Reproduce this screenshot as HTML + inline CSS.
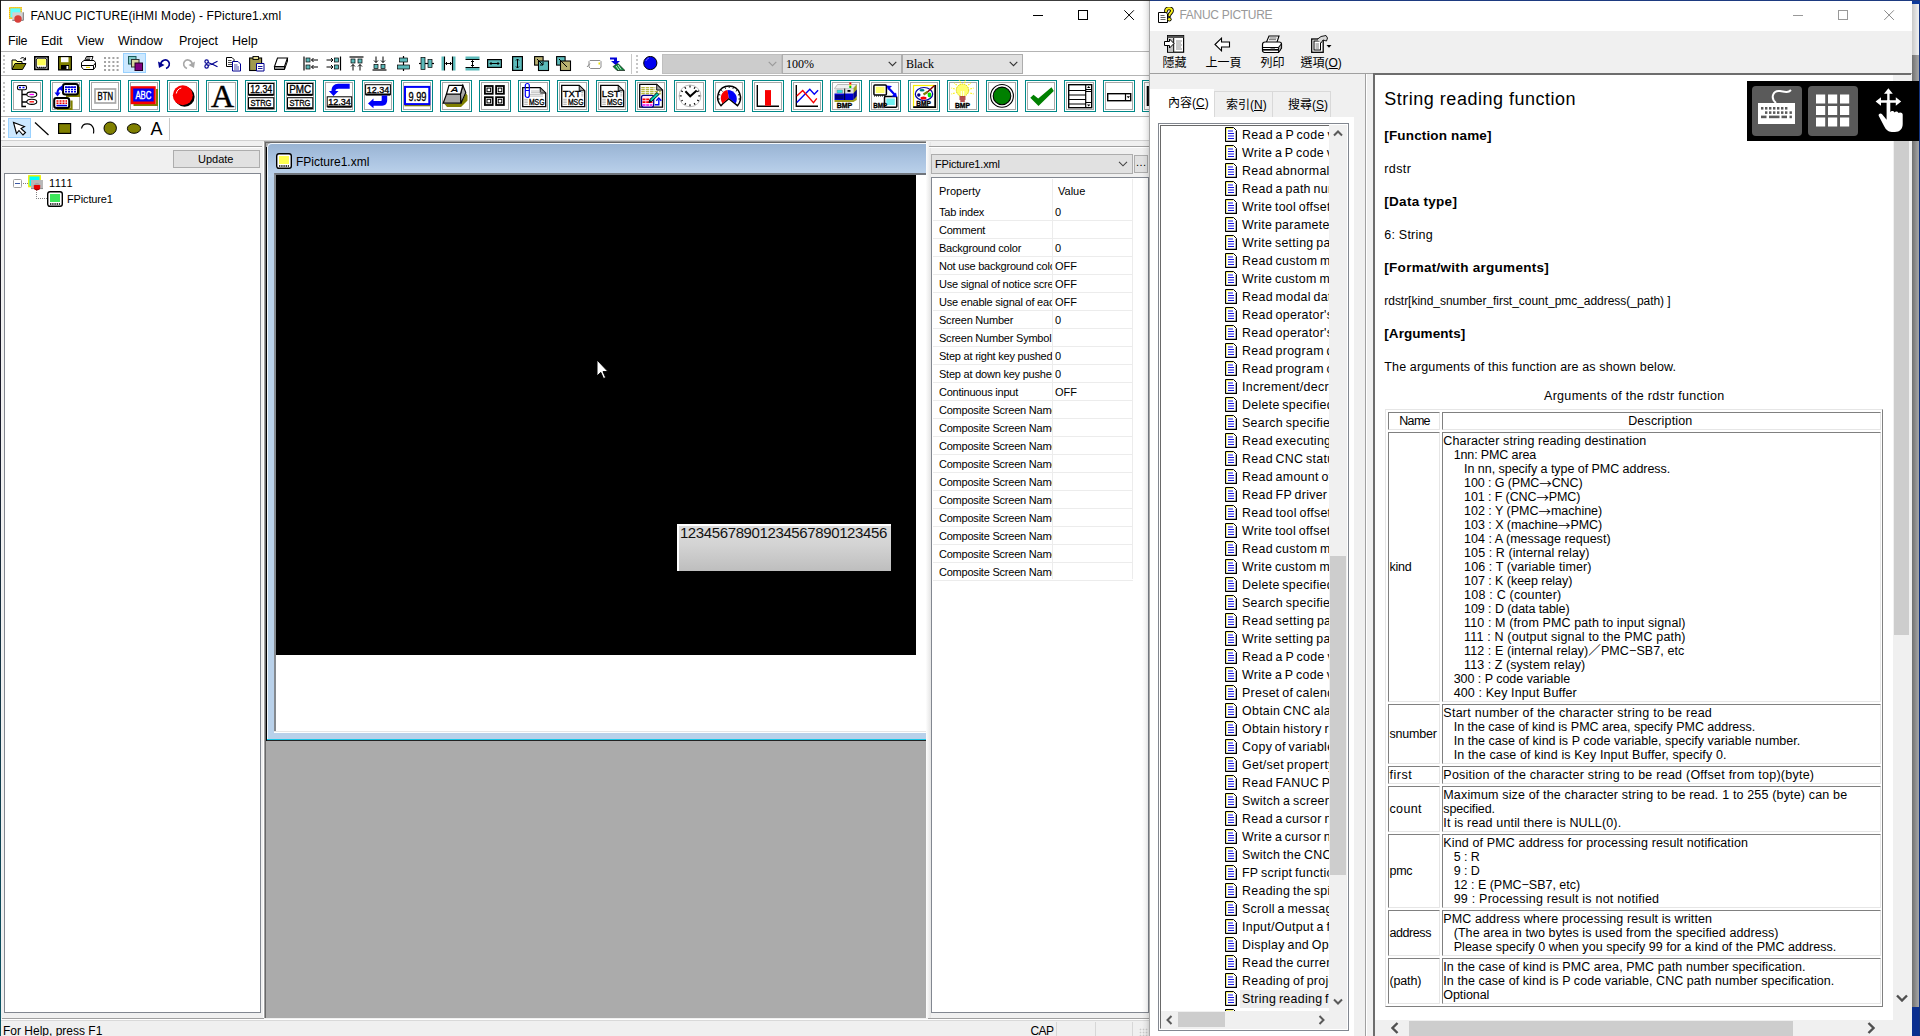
<!DOCTYPE html>
<html lang="en"><head><meta charset="utf-8"><title>FANUC PICTURE</title>
<style>
*{box-sizing:border-box;margin:0;padding:0}
html,body{width:1920px;height:1036px;overflow:hidden;background:#fff}
body{position:relative;font-family:"Liberation Sans","Noto Sans CJK TC",sans-serif;font-size:12px;color:#000}
.a{position:absolute}
.t{position:absolute;white-space:pre;line-height:1}

</style></head>
<body>
<!-- left_frame.html -->
<div class="a" id="lw" style="left:0;top:0;width:1150px;height:1036px;background:#f0f0f0;overflow:hidden">
 <div class="a" style="left:0;top:0;width:1150px;height:31px;background:#fff"></div>
 <div class="a" style="left:0;top:0;width:1150px;height:1px;background:#3c3c3c"></div>
 <svg class="a" style="left:9px;top:7px" width="16" height="16" viewBox="0 0 16 16"><rect x=".6" y=".6" width="11.600" height="10.600" fill="#60ffff" stroke="#f0a818" stroke-width="1.300"/><rect x=".6" y=".6" width="11.600" height="10.600" fill="none" stroke="#f8e838" stroke-width="1.300" stroke-dasharray="1 1"/><rect x="3.300" y="5.300" width="11.500" height="8" fill="#d2d2d2"/><path d="M14.300 5.300v8h-11" fill="none" stroke="#7a7a7a" stroke-width="1"/><circle cx="9" cy="12" r="3.700" fill="#d8403a"/></svg>
 <div class="t" style="left:30.500px;top:9.600px;font-size:12px;letter-spacing:.1px">FANUC PICTURE(iHMI Mode) - FPicture1.xml</div>
 <!-- window buttons -->
 <div class="a" style="left:1033px;top:15px;width:10px;height:1px;background:#000"></div>
 <div class="a" style="left:1078px;top:10px;width:10px;height:10px;border:1px solid #000"></div>
 <svg class="a" style="left:1124px;top:10px" width="11" height="11" viewBox="0 0 11 11"><path d="M.3.300L9.900 9.900M9.900.300L.3 9.900" stroke="#000" stroke-width="1" fill="none"/></svg>
 <!-- menu -->
 <div class="a" style="left:0;top:31px;width:1150px;height:20px;background:#fff"></div>
 <div class="t" style="left:8px;top:35px;font-size:12.5px;letter-spacing:-.2px">File</div>
 <div class="t" style="left:41px;top:35px;font-size:12.5px">Edit</div>
 <div class="t" style="left:77px;top:35px;font-size:12.5px">View</div>
 <div class="t" style="left:118px;top:35px;font-size:12.5px">Window</div>
 <div class="t" style="left:179px;top:35px;font-size:12.5px">Project</div>
 <div class="t" style="left:232px;top:35px;font-size:12.5px">Help</div>
 <!-- toolbar backgrounds -->
 <div class="a" style="left:0;top:51px;width:1150px;height:90px;background:#fff"></div>
 <div class="a" style="left:0;top:51px;width:1150px;height:1px;background:#b4b4b4"></div>
 <div class="a" style="left:0;top:75px;width:1150px;height:1px;background:#b4b4b4"></div>
 <div class="a" style="left:0;top:116px;width:1150px;height:1px;background:#b4b4b4"></div>
 <div class="a" style="left:0;top:140px;width:1150px;height:1px;background:#d0d0d0"></div>
 <!-- status bar -->
 <div class="a" style="left:0;top:1019px;width:1150px;height:17px;background:#f0f0f0"></div>
 <div class="a" style="left:0;top:1019px;width:1150px;height:1px;background:#fff"></div>
 <div class="a" style="left:0;top:1020px;width:1150px;height:1px;background:#d9d9d9"></div>
 <div class="t" style="left:3px;top:1025px;font-size:12px">For Help, press F1</div>
 <div class="t" style="left:1030.500px;top:1025px;font-size:12px;letter-spacing:-.6px">CAP</div>
 <div class="a" style="left:1056px;top:1022px;width:1px;height:14px;background:#d7d7d7"></div>
 <div class="a" style="left:1095px;top:1022px;width:1px;height:14px;background:#d7d7d7"></div>
 <div class="a" style="left:1132px;top:1022px;width:1px;height:14px;background:#d7d7d7"></div>
 <div class="a" style="left:1139px;top:1028px;width:9px;height:8px;background-image:radial-gradient(#cacaca 40%,transparent 50%);background-size:3px 3px"></div>
 <div class="a" style="left:0;top:0;width:1px;height:1036px;background:linear-gradient(#161616,#1a1a2a 40%,#0a5666 100%)"></div>
</div>

<!-- toolbars.html -->
<div class="a" style="left:3px;top:55px;width:2px;height:18px;background-image:linear-gradient(#c6c6c6 50%,transparent 50%);background-size:2px 4px"></div>
<div class="a" style="left:3px;top:82px;width:2px;height:30px;background-image:linear-gradient(#c6c6c6 50%,transparent 50%);background-size:2px 4px"></div>
<div class="a" style="left:3px;top:120px;width:2px;height:18px;background-image:linear-gradient(#c6c6c6 50%,transparent 50%);background-size:2px 4px"></div>
<div class="a" style="left:636px;top:55px;width:2px;height:18px;background-image:linear-gradient(#c6c6c6 50%,transparent 50%);background-size:2px 4px"></div>
<svg class="a" style="left:11px;top:56px" width="16" height="16" viewBox="0 0 16 16"><path d="M1 13V4h4l1 1.500h5V7" fill="#ffff80" stroke="#000" stroke-width="1"/><path d="M1 13.500l3-6h11l-3.500 6z" fill="#808000" stroke="#000" stroke-width="1"/><path d="M9.500 2.500c2-1.500 4-1 4.500 1M14.500 1.500v2.500h-2.500" fill="none" stroke="#000" stroke-width="1"/></svg>
<svg class="a" style="left:34px;top:56px" width="16" height="16" viewBox="0 0 16 16"><rect x=".8" y=".8" width="13.400" height="12.600" fill="#fff" stroke="#000" stroke-width="1.600"/><rect x="2.300" y="2.200" width="10.400" height="9.800" rx="1.800" fill="#fff" stroke="#000" stroke-width=".900"/><rect x="3.300" y="3" width="8.400" height="6.300" fill="#ffff58"/><path d="M3 11.300h9" stroke="#000" stroke-width="1.200" stroke-dasharray="1 .900"/></svg>
<svg class="a" style="left:58px;top:56px" width="16" height="16" viewBox="0 0 16 16"><path d="M.6.600h12.800v13.300H.6z" fill="#808000" stroke="#000" stroke-width="1.200"/><rect x="3" y="1.200" width="7.500" height="5" fill="#fff"/><rect x="3" y="9" width="8" height="4.500" fill="#000"/><rect x="8.500" y="10" width="1.800" height="3" fill="#fff"/></svg>
<svg class="a" style="left:80px;top:56px" width="16" height="16" viewBox="0 0 16 16"><path d="M4.500 5l2-4.500h6.500l-1.500 4.500" fill="#fff" stroke="#000"/><path d="M1.500 6.500l2.500-2h10l1.500 2v4.500l-2 2.500h-10l-2-2.500z" fill="#fff" stroke="#000"/><path d="M1.500 9.500h12l2-2.500M13.500 9.500v4" fill="none" stroke="#000"/><path d="M6.500 2h4M6 3.500h4" stroke="#000" stroke-width=".800"/><rect x="6" y="10.800" width="4" height="1.200" fill="#e8d800"/></svg>
<svg class="a" style="left:104px;top:57px" width="16" height="16" viewBox="0 0 16 16"><rect x="0.0" y="0.0" width="2" height="2" fill="#a4a4a4"/><rect x="0.0" y="4.0" width="2" height="2" fill="#a4a4a4"/><rect x="0.0" y="8.0" width="2" height="2" fill="#a4a4a4"/><rect x="0.0" y="12.0" width="2" height="2" fill="#a4a4a4"/><rect x="4.2" y="0.0" width="2" height="2" fill="#a4a4a4"/><rect x="4.2" y="4.0" width="2" height="2" fill="#a4a4a4"/><rect x="4.2" y="8.0" width="2" height="2" fill="#a4a4a4"/><rect x="4.2" y="12.0" width="2" height="2" fill="#a4a4a4"/><rect x="8.4" y="0.0" width="2" height="2" fill="#a4a4a4"/><rect x="8.4" y="4.0" width="2" height="2" fill="#a4a4a4"/><rect x="8.4" y="8.0" width="2" height="2" fill="#a4a4a4"/><rect x="8.4" y="12.0" width="2" height="2" fill="#a4a4a4"/><rect x="12.6" y="0.0" width="2" height="2" fill="#a4a4a4"/><rect x="12.6" y="4.0" width="2" height="2" fill="#a4a4a4"/><rect x="12.6" y="8.0" width="2" height="2" fill="#a4a4a4"/><rect x="12.6" y="12.0" width="2" height="2" fill="#a4a4a4"/></svg>
<div class="a" style="left:123px;top:53px;width:23px;height:20px;background:#cce8ff;border:1px solid #99d1ff"></div>
<svg class="a" style="left:128px;top:56px" width="16" height="16" viewBox="0 0 16 16"><rect x=".5" y=".5" width="7.500" height="7.500" fill="#7fc8c8" stroke="#1a5a5a"/><rect x="3.500" y="3.500" width="7.500" height="7.500" fill="#d8d8a0" stroke="#333"/><rect x="7" y="7" width="7.500" height="7.500" fill="#800080" stroke="#200020"/></svg>
<svg class="a" style="left:157px;top:56px" width="16" height="16" viewBox="0 0 16 16"><path d="M3.500 9C4 4 9 2.500 11.500 5.500c2 2.500.5 6-2.500 7" fill="none" stroke="#000090" stroke-width="1.700"/><path d="M1 5.500l1 6.500 5.500-3z" fill="#000090"/></svg>
<svg class="a" style="left:181px;top:56px" width="16" height="16" viewBox="0 0 16 16"><path d="M11.500 9C11 4 6 2.500 3.500 5.500c-2 2.500-.5 6 2.500 7" fill="none" stroke="#a8a8a8" stroke-width="1.700"/><path d="M14 5.500l-1 6.500-5.500-3z" fill="#a8a8a8"/></svg>
<svg class="a" style="left:204px;top:56px" width="16" height="16" viewBox="0 0 16 16"><circle cx="2.600" cy="5.600" r="1.700" fill="none" stroke="#000090" stroke-width="1.200"/><circle cx="2.600" cy="10.400" r="1.700" fill="none" stroke="#000090" stroke-width="1.200"/><path d="M4 6.500l5 2 4.500 2.200M4 9.500l5-2 4.500-2.200" fill="none" stroke="#000090" stroke-width="1.200"/></svg>
<svg class="a" style="left:226px;top:56px" width="16" height="16" viewBox="0 0 16 16"><path d="M.5 1.500h5.500l2 2v7h-7.500z" fill="#fff" stroke="#000" stroke-width="1"/><path d="M2 4.500h3.500M2 6.500h4.500M2 8.500h4.500" stroke="#000" stroke-width=".700"/><path d="M6.500 5.500h5.500l2.500 2.500v7h-8z" fill="#fff" stroke="#000090" stroke-width="1"/><path d="M8 9h3.500M8 11h5M8 13h5" stroke="#000090" stroke-width=".700"/></svg>
<svg class="a" style="left:249px;top:56px" width="16" height="16" viewBox="0 0 16 16"><rect x=".6" y="2" width="12" height="12.500" fill="#a09a50" stroke="#000" stroke-width="1.100"/><rect x="4" y=".5" width="5.500" height="3" fill="#e0d890" stroke="#000" stroke-width=".900"/><path d="M7.500 7.500h7.500v7.500h-7.500z" fill="#fff" stroke="#000090"/><path d="M9 10.500h4.500M9 12.500h4.500" stroke="#000090" stroke-width=".900"/></svg>
<svg class="a" style="left:273px;top:56px" width="16" height="16" viewBox="0 0 16 16"><path d="M4.500 2h10l-3 8.500h-10z" fill="#fff" stroke="#000" stroke-width="1.100"/><path d="M1.500 10.500h10v3h-10z" fill="#8c8c8c" stroke="#000" stroke-width="1"/><path d="M11.500 13.500l3-8.500v-3" fill="none" stroke="#000" stroke-width="1"/></svg>
<svg class="a" style="left:303px;top:56px" width="16" height="16" viewBox="0 0 16 16"><path d="M1 .5v14" stroke="#000" stroke-width="1.200"/><rect x="3" y="2" width="4" height="4" fill="#5cbaba" stroke="#000" stroke-width=".700"/><rect x="3" y="9" width="4" height="4" fill="#5cbaba" stroke="#000" stroke-width=".700"/><path d="M15 4h-6.500M15 11h-6.500M10.500 2l-2 2 2 2M10.500 9l-2 2 2 2" fill="none" stroke="#000"/></svg>
<svg class="a" style="left:326px;top:56px" width="16" height="16" viewBox="0 0 16 16"><path d="M14.500 .5v14" stroke="#000" stroke-width="1.200"/><rect x="8.5" y="2" width="4" height="4" fill="#5cbaba" stroke="#000" stroke-width=".700"/><rect x="8.5" y="9" width="4" height="4" fill="#5cbaba" stroke="#000" stroke-width=".700"/><path d="M.5 4h6.500M.5 11h6.500M5 2l2 2-2 2M5 9l2 2-2 2" fill="none" stroke="#000"/></svg>
<svg class="a" style="left:349px;top:56px" width="16" height="16" viewBox="0 0 16 16"><path d="M.5 1h14" stroke="#000" stroke-width="1.200"/><rect x="2" y="3" width="4" height="4" fill="#5cbaba" stroke="#000" stroke-width=".700"/><rect x="9" y="3" width="4" height="4" fill="#5cbaba" stroke="#000" stroke-width=".700"/><path d="M4 14.500v-6M11 14.500v-6M2 10.500l2-2 2 2M9 10.500l2-2 2 2" fill="none" stroke="#000"/></svg>
<svg class="a" style="left:372px;top:56px" width="16" height="16" viewBox="0 0 16 16"><path d="M.5 14h14" stroke="#000" stroke-width="1.200"/><rect x="2" y="8.5" width="4" height="4" fill="#5cbaba" stroke="#000" stroke-width=".700"/><rect x="9" y="8.5" width="4" height="4" fill="#5cbaba" stroke="#000" stroke-width=".700"/><path d="M4 .5v6M11 .5v6M2 4.500l2 2 2-2M9 4.500l2 2 2-2" fill="none" stroke="#000"/></svg>
<svg class="a" style="left:396px;top:56px" width="16" height="16" viewBox="0 0 16 16"><path d="M7.500 0v15" stroke="#000" stroke-width="1.200"/><rect x="3.5" y="2" width="8" height="4" fill="#5cbaba" stroke="#000" stroke-width=".700"/><rect x="1.5" y="9" width="12" height="4" fill="#5cbaba" stroke="#000" stroke-width=".700"/></svg>
<svg class="a" style="left:419px;top:56px" width="16" height="16" viewBox="0 0 16 16"><path d="M0 7.500h15" stroke="#000" stroke-width="1.200"/><rect x="2" y="1.5" width="4" height="12" fill="#5cbaba" stroke="#000" stroke-width=".700"/><rect x="9" y="3.5" width="4" height="8" fill="#5cbaba" stroke="#000" stroke-width=".700"/></svg>
<svg class="a" style="left:441px;top:56px" width="16" height="16" viewBox="0 0 16 16"><rect x=".5" y=".5" width="2.500" height="14" fill="#5cbaba"/><rect x="12" y=".5" width="2.500" height="14" fill="#5cbaba"/><path d="M3.500 .5v14M11.500 .5v14" stroke="#000" stroke-width="1.100"/><path d="M4.500 7.500h6M6 6l-1.500 1.500L6 9M9 6l1.500 1.500L9 9" fill="none" stroke="#000"/></svg>
<svg class="a" style="left:465px;top:56px" width="16" height="16" viewBox="0 0 16 16"><rect x=".5" y=".5" width="14" height="2.500" fill="#5cbaba"/><rect x=".5" y="12" width="14" height="2.500" fill="#5cbaba"/><path d="M.5 3.500h14M.5 11.500h14" stroke="#000" stroke-width="1.100"/><path d="M7.500 4.500v6M6 6l1.500-1.500L9 6M6 9l1.500 1.500L9 9" fill="none" stroke="#000"/></svg>
<svg class="a" style="left:487px;top:56px" width="16" height="16" viewBox="0 0 16 16"><rect x=".6" y="3.600" width="13.800" height="7.800" fill="#5cbaba" stroke="#000" stroke-width="1.200"/><path d="M3 7.500h9M4.500 6L3 7.500 4.500 9M10.500 6L12 7.500 10.500 9" fill="none" stroke="#000"/></svg>
<svg class="a" style="left:510px;top:56px" width="16" height="16" viewBox="0 0 16 16"><rect x="2.600" y=".6" width="9.800" height="13.800" fill="#5cbaba" stroke="#000" stroke-width="1.200"/><path d="M7.500 3v9M6 4.500L7.500 3 9 4.500M6 10.500L7.500 12 9 10.500" fill="none" stroke="#000"/></svg>
<svg class="a" style="left:534px;top:56px" width="16" height="16" viewBox="0 0 16 16"><rect x=".6" y=".6" width="8.500" height="8.500" fill="#b8b070" stroke="#000" stroke-width="1.100"/><rect x="4.500" y="5" width="10" height="9.500" fill="#5cbaba" stroke="#000" stroke-width="1.100"/><path d="M3 3l6 6M9 6v3H6" fill="none" stroke="#000"/></svg>
<svg class="a" style="left:556px;top:56px" width="16" height="16" viewBox="0 0 16 16"><rect x=".6" y=".6" width="8.500" height="8.500" fill="#5cbaba" stroke="#000" stroke-width="1.100"/><rect x="4.500" y="5" width="10" height="9.500" fill="#b8b070" stroke="#000" stroke-width="1.100"/><path d="M3 3l8 8" fill="none" stroke="#000"/></svg>
<svg class="a" style="left:586px;top:56px" width="16" height="16" viewBox="0 0 16 16"><path d="M1 11l3-3.500M4 4.500h10l1 1v5.500l-1 1.500h-9.500l-1.500-1.500v-5.500z" fill="#fff" stroke="#8c8c8c" stroke-width="1"/><rect x="12.500" y="6.500" width="1.500" height="2" fill="#e8e000"/></svg>
<svg class="a" style="left:609px;top:56px" width="16" height="16" viewBox="0 0 16 16"><path d="M1 1.500h7v3.500h3l-4.500 4-4.500-4h3v-1.500h-4z" fill="#0000d8"/><path d="M4 10.500l5-3 7 7h-8z" fill="#0a8a3a" stroke="#000" stroke-width=".600"/><path d="M7 10l3 4M9 9l3 4.500" stroke="#fff" stroke-width=".800"/></svg>
<div class="a" style="left:631px;top:54px;width:1px;height:20px;background:#c8c8c8"></div>
<svg class="a" style="left:643px;top:56px" width="16" height="16" viewBox="0 0 16 16"><circle cx="7.300" cy="7" r="6.600" fill="#0000f0" stroke="#000" stroke-width="1"/><path d="M3 5c.5-1.500 1.500-2.500 3-3" fill="none" stroke="#6a6aff" stroke-width="1"/></svg>
<div class="a" style="left:662px;top:54px;width:120px;height:20px;background:#cccccc;border:1px solid #bfbfbf"></div>
<svg class="a" style="left:768px;top:61px" width="9" height="6" viewBox="0 0 9 6"><path d="M.7.800l3.800 3.800 3.800-3.800" fill="none" stroke="#9a9a9a" stroke-width="1.100"/></svg>
<div class="a" style="left:782px;top:54px;width:120px;height:20px;background:#e1e1e1;border:1px solid #adadad"></div>
<svg class="a" style="left:888px;top:61px" width="9" height="6" viewBox="0 0 9 6"><path d="M.7.800l3.800 3.800 3.800-3.800" fill="none" stroke="#333" stroke-width="1.100"/></svg>
<div class="t" style="left:786px;top:57.5px;font-family:'Liberation Serif',serif;font-size:12px">100%</div>
<div class="a" style="left:902px;top:54px;width:121px;height:20px;background:#e1e1e1;border:1px solid #adadad"></div>
<svg class="a" style="left:1009px;top:61px" width="9" height="6" viewBox="0 0 9 6"><path d="M.7.800l3.800 3.800 3.800-3.800" fill="none" stroke="#333" stroke-width="1.100"/></svg>
<div class="t" style="left:906px;top:57.5px;font-family:'Liberation Serif',serif;font-size:12px">Black</div>
<svg class="a" style="left:11px;top:80px" width="32" height="32" viewBox="0 0 32 32"><rect x=".5" y=".5" width="31" height="31" fill="#fff" stroke="#088" stroke-width="1"/><rect x="2.500" y="2.500" width="27" height="27" fill="#fff" stroke="#a8a8a8" stroke-width="1"/><path d="M11 10v16.500h4M11 14.500h5M11 22h5" fill="none" stroke="#000" stroke-width="1.300"/><rect x="6.500" y="5.500" width="9" height="4.200" rx="1.500" fill="#fff" stroke="#000" stroke-width="1.100"/><path d="M8 7.600h2M11.500 7.600h2" stroke="#00f" stroke-width="1.500"/><ellipse cx="20.800" cy="14.500" rx="5" ry="2.600" fill="#fff" stroke="#000" stroke-width="1.100"/><path d="M18.500 14.500h4.500" stroke="#f0f" stroke-width="1.300"/><ellipse cx="20.800" cy="21.800" rx="5" ry="2.600" fill="#fff" stroke="#000" stroke-width="1.100"/><path d="M18.500 21.800h4.500" stroke="#f00" stroke-width="1.300"/></svg>
<svg class="a" style="left:50px;top:80px" width="32" height="32" viewBox="0 0 32 32"><rect x=".5" y=".5" width="31" height="31" fill="#fff" stroke="#088" stroke-width="1"/><rect x="2.500" y="2.500" width="27" height="27" fill="#fff" stroke="#a8a8a8" stroke-width="1"/><path d="M16 15.800h13V7" fill="none" stroke="#808000" stroke-width="2.200"/><path d="M7 29h14.500v-8.500" fill="none" stroke="#808000" stroke-width="2.200"/><rect x="13" y="4" width="15" height="10.500" rx="2.200" fill="#fff" stroke="#000" stroke-width="2"/><path d="M15 7.200h11M15 9.500h11M15 11.800h11" stroke="#0000e0" stroke-width="1.500" stroke-dasharray="2 1"/><path d="M15 7.200h11" stroke="#0000e0" stroke-width="1.500"/><rect x="4.200" y="18" width="15" height="10" rx="2.200" fill="#fff" stroke="#000" stroke-width="2"/><path d="M6.500 21h10.500M6.500 23.200h10.500" stroke="#f00000" stroke-width="1.500" stroke-dasharray="2 1"/><path d="M6.500 25.600h10.500" stroke="#0000e0" stroke-width="1.600"/><path d="M11.500 8c-3.500 0-4 2.500-4 5.500" fill="none" stroke="#0000f0" stroke-width="2"/><path d="M4.500 12.500h6l-3 4zM8.500 8.200l4-3.200v6.400z" fill="#0000f0"/></svg>
<svg class="a" style="left:89px;top:80px" width="32" height="32" viewBox="0 0 32 32"><rect x=".5" y=".5" width="31" height="31" fill="#fff" stroke="#088" stroke-width="1"/><rect x="2.500" y="2.500" width="27" height="27" fill="#fff" stroke="#a8a8a8" stroke-width="1"/><rect x="6" y="9" width="20.500" height="14" fill="#fff" stroke="#a8a8a8" stroke-width="1.700"/><text x="16.3" y="19.7" font-family="Liberation Sans,sans-serif" font-size="10" font-weight="400" fill="#000" stroke="#000" stroke-width=".350" text-anchor="middle" textLength="15.5" lengthAdjust="spacingAndGlyphs">BTN</text></svg>
<svg class="a" style="left:128px;top:80px" width="32" height="32" viewBox="0 0 32 32"><rect x=".5" y=".5" width="31" height="31" fill="#fff" stroke="#088" stroke-width="1"/><rect x="2.500" y="2.500" width="27" height="27" fill="#fff" stroke="#a8a8a8" stroke-width="1"/><path d="M5.500 25h23.500V9" fill="none" stroke="#808000" stroke-width="2"/><rect x="2.700" y="6.200" width="25" height="18" fill="#f80000"/><rect x="5.200" y="8.500" width="20.500" height="13" fill="#0000f8"/><text x="15.4" y="19" font-family="Liberation Sans,sans-serif" font-size="10" font-weight="400" fill="#fff" stroke="#fff" stroke-width=".350" text-anchor="middle" textLength="16" lengthAdjust="spacingAndGlyphs">ABC</text></svg>
<svg class="a" style="left:167px;top:80px" width="32" height="32" viewBox="0 0 32 32"><rect x=".5" y=".5" width="31" height="31" fill="#fff" stroke="#088" stroke-width="1"/><rect x="2.500" y="2.500" width="27" height="27" fill="#fff" stroke="#a8a8a8" stroke-width="1"/><circle cx="17.600" cy="16.800" r="10" fill="#000"/><circle cx="15.800" cy="15.200" r="10" fill="#f80000"/><path d="M9.300 13.500c.5-3 2.500-5 5-5.500" fill="none" stroke="#fff" stroke-width="1"/></svg>
<svg class="a" style="left:206px;top:80px" width="32" height="32" viewBox="0 0 32 32"><rect x=".5" y=".5" width="31" height="31" fill="#fff" stroke="#088" stroke-width="1"/><rect x="2.500" y="2.500" width="27" height="27" fill="#fff" stroke="#a8a8a8" stroke-width="1"/><text x="16.500" y="26.700" font-family="Liberation Serif,serif" font-size="32" fill="#000" stroke="#000" stroke-width=".500" text-anchor="middle">A</text></svg>
<svg class="a" style="left:245px;top:80px" width="32" height="32" viewBox="0 0 32 32"><rect x=".5" y=".5" width="31" height="31" fill="#fff" stroke="#088" stroke-width="1"/><rect x="2.500" y="2.500" width="27" height="27" fill="#fff" stroke="#a8a8a8" stroke-width="1"/><rect x="3.5" y="3.5" width="25.3" height="11.5" fill="#fff" stroke="#000" stroke-width="1"/><rect x="3.8" y="13.8" width="24.7" height="2" fill="#000"/><rect x="3.5" y="17.7" width="25.3" height="10.7" fill="#fff" stroke="#000" stroke-width="1"/><rect x="3.8" y="27.2" width="24.7" height="2" fill="#000"/><text x="16.2" y="13.1" font-family="Liberation Sans,sans-serif" font-size="11" font-weight="400" fill="#000" stroke="#000" stroke-width=".350" text-anchor="middle" textLength="22" lengthAdjust="spacingAndGlyphs">12.34</text><text x="16" y="26" font-family="Liberation Sans,sans-serif" font-size="9.5" font-weight="400" fill="#000" stroke="#000" stroke-width=".350" text-anchor="middle" textLength="21" lengthAdjust="spacingAndGlyphs">STRG</text></svg>
<svg class="a" style="left:284px;top:80px" width="32" height="32" viewBox="0 0 32 32"><rect x=".5" y=".5" width="31" height="31" fill="#fff" stroke="#088" stroke-width="1"/><rect x="2.500" y="2.500" width="27" height="27" fill="#fff" stroke="#a8a8a8" stroke-width="1"/><rect x="3.5" y="3.5" width="25.3" height="11.5" fill="#fff" stroke="#000" stroke-width="1"/><rect x="3.8" y="13.8" width="24.7" height="2" fill="#000"/><rect x="3.5" y="17.7" width="25.3" height="10.7" fill="#fff" stroke="#000" stroke-width="1"/><rect x="3.8" y="27.2" width="24.7" height="2" fill="#000"/><text x="16.2" y="13.1" font-family="Liberation Sans,sans-serif" font-size="11" font-weight="400" fill="#000" stroke="#000" stroke-width=".350" text-anchor="middle" textLength="22" lengthAdjust="spacingAndGlyphs">PMC</text><text x="16" y="26" font-family="Liberation Sans,sans-serif" font-size="9.5" font-weight="400" fill="#000" stroke="#000" stroke-width=".350" text-anchor="middle" textLength="21" lengthAdjust="spacingAndGlyphs">STRG</text></svg>
<svg class="a" style="left:323px;top:80px" width="32" height="32" viewBox="0 0 32 32"><rect x=".5" y=".5" width="31" height="31" fill="#fff" stroke="#088" stroke-width="1"/><rect x="2.500" y="2.500" width="27" height="27" fill="#fff" stroke="#a8a8a8" stroke-width="1"/><path d="M26.700 3.800v5h-11.500c-1.800 0-2.700.700-2.700 2.200h3l-5 5-4.600-5h2.600c0-4.200 2.500-7.200 6.700-7.200z" fill="#0000f8"/><rect x="4.2" y="16.8" width="24.5" height="10.0" fill="#fff" stroke="#000" stroke-width="1"/><rect x="4.5" y="25.6" width="23.9" height="2" fill="#000"/><text x="16.4" y="25.1" font-family="Liberation Sans,sans-serif" font-size="9" font-weight="400" fill="#000" stroke="#000" stroke-width=".350" text-anchor="middle" textLength="22.5" lengthAdjust="spacingAndGlyphs">12.34</text></svg>
<svg class="a" style="left:362px;top:80px" width="32" height="32" viewBox="0 0 32 32"><rect x=".5" y=".5" width="31" height="31" fill="#fff" stroke="#088" stroke-width="1"/><rect x="2.500" y="2.500" width="27" height="27" fill="#fff" stroke="#a8a8a8" stroke-width="1"/><rect x="3.6" y="4.7" width="24.8" height="10.0" fill="#fff" stroke="#000" stroke-width="1"/><rect x="3.9000000000000004" y="13.5" width="24.2" height="2" fill="#000"/><text x="16" y="13.1" font-family="Liberation Sans,sans-serif" font-size="9" font-weight="400" fill="#000" stroke="#000" stroke-width=".350" text-anchor="middle" textLength="22.5" lengthAdjust="spacingAndGlyphs">12.34</text><path d="M19.700 15.500h5.500v4.500c0 3.500-1.700 5.700-5 5.700h-8.700v2.500l-5.500-4.800 5.500-4.800v2.500h7.200c.8 0 1-.700 1-1.600z" fill="#0000f8"/></svg>
<svg class="a" style="left:401px;top:80px" width="32" height="32" viewBox="0 0 32 32"><rect x=".5" y=".5" width="31" height="31" fill="#fff" stroke="#088" stroke-width="1"/><rect x="2.500" y="2.500" width="27" height="27" fill="#fff" stroke="#a8a8a8" stroke-width="1"/><path d="M3.500 25.600h25.500" stroke="#808000" stroke-width="1.400"/><rect x="4" y="6.900" width="24.300" height="17.200" fill="#fff" stroke="#0000f8" stroke-width="2"/><text x="16.5" y="20.9" font-family="Liberation Sans,sans-serif" font-size="13.5" font-weight="400" fill="#000" stroke="#000" stroke-width=".350" text-anchor="middle" textLength="18" lengthAdjust="spacingAndGlyphs">9.99</text></svg>
<svg class="a" style="left:440px;top:80px" width="32" height="32" viewBox="0 0 32 32"><rect x=".5" y=".5" width="31" height="31" fill="#fff" stroke="#088" stroke-width="1"/><rect x="2.500" y="2.500" width="27" height="27" fill="#fff" stroke="#a8a8a8" stroke-width="1"/><path d="M4.500 24l2.500 3h14l6.500-6.500v-5l-1.500-2.500-5 10.500z" fill="#808000"/><path d="M6.500 14h14l.5 9.200h-17.800z" fill="#a8a8a8" stroke="#000" stroke-width="1.200"/><path d="M22.800 5.300l3 7.200-4.800 10.700-.5-9.200z" fill="#a8a8a8" stroke="#000" stroke-width="1.100"/><path d="M9 5.300h13.800l-2.300 8.700h-14z" fill="#fff" stroke="#000" stroke-width="1.200"/><text x="14.600" y="12.300" font-family="Liberation Sans,sans-serif" font-size="7.500" font-style="italic" font-weight="700" text-anchor="middle" textLength="8" lengthAdjust="spacingAndGlyphs">A</text></svg>
<svg class="a" style="left:479px;top:80px" width="32" height="32" viewBox="0 0 32 32"><rect x=".5" y=".5" width="31" height="31" fill="#fff" stroke="#088" stroke-width="1"/><rect x="2.500" y="2.500" width="27" height="27" fill="#fff" stroke="#a8a8a8" stroke-width="1"/><rect x="5.9" y="6.0" width="7.800" height="7.800" fill="#fff" stroke="#000" stroke-width="1.800"/><rect x="8" y="8.1" width="3.600" height="3.600" fill="#fff" stroke="#000" stroke-width="1"/><rect x="17.099999999999998" y="6.0" width="7.800" height="7.800" fill="#fff" stroke="#000" stroke-width="1.800"/><rect x="19.2" y="8.1" width="3.600" height="3.600" fill="#fff" stroke="#000" stroke-width="1"/><rect x="5.9" y="17.2" width="7.800" height="7.800" fill="#fff" stroke="#000" stroke-width="1.800"/><rect x="8" y="19.3" width="3.600" height="3.600" fill="#fff" stroke="#000" stroke-width="1"/><rect x="17.099999999999998" y="17.2" width="7.800" height="7.800" fill="#fff" stroke="#000" stroke-width="1.800"/><rect x="19.2" y="19.3" width="3.600" height="3.600" fill="#fff" stroke="#000" stroke-width="1"/></svg>
<svg class="a" style="left:518px;top:80px" width="32" height="32" viewBox="0 0 32 32"><rect x=".5" y=".5" width="31" height="31" fill="#fff" stroke="#088" stroke-width="1"/><rect x="2.500" y="2.500" width="27" height="27" fill="#fff" stroke="#a8a8a8" stroke-width="1"/><path d="M4.700 7.6h17.500l5.500 5.500v13.600000000000001h-23z" fill="#fff" stroke="#000" stroke-width="1.300"/><path d="M22.200 7.6l5.500 5.500h-5.500z" fill="#a0a0a0" stroke="#000" stroke-width=".900"/><path d="M6.300 19.300h3.500M6.300 21h3.500M6.300 22.700h3.500M6.300 24.400h3.500" stroke="#a0a0a0" stroke-width=".800"/><path d="M13 11h8M13 12.700h10M12 14.400h13M12 16.100h13" stroke="#b0b0b0" stroke-width=".800"/><text x="18.7" y="24.8" font-family="Liberation Sans,sans-serif" font-size="9" font-weight="400" fill="#000" stroke="#000" stroke-width=".350" text-anchor="middle" textLength="15.5" lengthAdjust="spacingAndGlyphs">MSG</text><rect x="7.300" y="3.500" width="4" height="14" rx="2" fill="none" stroke="#0000f8" stroke-width="1.200"/><path d="M7.300 10.500h4" stroke="#0000f8" stroke-width="1"/></svg>
<svg class="a" style="left:557px;top:80px" width="32" height="32" viewBox="0 0 32 32"><rect x=".5" y=".5" width="31" height="31" fill="#fff" stroke="#088" stroke-width="1"/><rect x="2.500" y="2.500" width="27" height="27" fill="#fff" stroke="#a8a8a8" stroke-width="1"/><path d="M4.700 5.3h17.500l5.500 5.500v15.899999999999999h-23z" fill="#fff" stroke="#000" stroke-width="1.300"/><path d="M22.200 5.3l5.500 5.500h-5.500z" fill="#a0a0a0" stroke="#000" stroke-width=".900"/><path d="M6.300 19.300h3.500M6.300 21h3.500M6.300 22.700h3.500M6.300 24.400h3.500" stroke="#a0a0a0" stroke-width=".800"/><text x="14.8" y="16.8" font-family="Liberation Sans,sans-serif" font-size="9.5" font-weight="400" fill="#000" stroke="#000" stroke-width=".350" text-anchor="middle" textLength="18" lengthAdjust="spacingAndGlyphs">TXT</text><path d="M24.300 12.500h2M24.300 14.200h2M24.300 15.900h2" stroke="#a0a0a0" stroke-width=".800"/><text x="18.7" y="24.8" font-family="Liberation Sans,sans-serif" font-size="9" font-weight="400" fill="#000" stroke="#000" stroke-width=".350" text-anchor="middle" textLength="15.5" lengthAdjust="spacingAndGlyphs">MSG</text></svg>
<svg class="a" style="left:596px;top:80px" width="32" height="32" viewBox="0 0 32 32"><rect x=".5" y=".5" width="31" height="31" fill="#fff" stroke="#088" stroke-width="1"/><rect x="2.500" y="2.500" width="27" height="27" fill="#fff" stroke="#a8a8a8" stroke-width="1"/><path d="M4.700 5.3h17.500l5.500 5.500v15.899999999999999h-23z" fill="#fff" stroke="#000" stroke-width="1.300"/><path d="M22.200 5.3l5.500 5.500h-5.500z" fill="#a0a0a0" stroke="#000" stroke-width=".900"/><path d="M6.300 19.300h3.500M6.300 21h3.500M6.300 22.700h3.500M6.300 24.400h3.500" stroke="#a0a0a0" stroke-width=".800"/><text x="14.8" y="16.8" font-family="Liberation Sans,sans-serif" font-size="9.5" font-weight="400" fill="#000" stroke="#000" stroke-width=".350" text-anchor="middle" textLength="18" lengthAdjust="spacingAndGlyphs">LST</text><path d="M24.300 12.500h2M24.300 14.200h2M24.300 15.900h2" stroke="#a0a0a0" stroke-width=".800"/><text x="18.7" y="24.8" font-family="Liberation Sans,sans-serif" font-size="9" font-weight="400" fill="#000" stroke="#000" stroke-width=".350" text-anchor="middle" textLength="15.5" lengthAdjust="spacingAndGlyphs">MSG</text></svg>
<svg class="a" style="left:635px;top:80px" width="32" height="32" viewBox="0 0 32 32"><rect x=".5" y=".5" width="31" height="31" fill="#fff" stroke="#088" stroke-width="1"/><rect x="2.500" y="2.500" width="27" height="27" fill="#fff" stroke="#a8a8a8" stroke-width="1"/><path d="M4.700 4.300h17l5.800 5.800v17h-22.800z" fill="#fff" stroke="#000" stroke-width="1.300"/><path d="M21.700 4.300l5.800 5.800h-5.800z" fill="#a0a0a0" stroke="#000" stroke-width=".900"/><path d="M6.300 7.700h14M6.300 9.700h14M6.300 11.700h19.500M6.300 13.700h19.500" stroke="#a0a000" stroke-width="1.100" stroke-dasharray="3.500 .900"/><rect x="6.500" y="15.300" width="12.200" height="11.800" rx="2" fill="#ffe8ff" stroke="#000090" stroke-width="1.300"/><path d="M7.500 19.300h10M7.500 22.200h10" stroke="#f80000" stroke-width="1.700" stroke-dasharray="3 .700"/><path d="M7.500 25h10" stroke="#f000f0" stroke-width="1.700" stroke-dasharray="3 .700"/><path d="M22 12.500l2 2-7.500 7-2.500 1 .7-2.800z" fill="#00d0b0" stroke="#000" stroke-width=".900"/><path d="M14 22.500l1-2.500 1.800 1.800z" fill="#000"/><path d="M19.800 24.800h4v-5M21.300 20.800l2.500-2.800 2.500 2.800" fill="none" stroke="#0000f8" stroke-width="1.400"/></svg>
<svg class="a" style="left:674px;top:80px" width="32" height="32" viewBox="0 0 32 32"><rect x=".5" y=".5" width="31" height="31" fill="#fff" stroke="#088" stroke-width="1"/><rect x="2.500" y="2.500" width="27" height="27" fill="#fff" stroke="#a8a8a8" stroke-width="1"/><circle cx="16" cy="15.900" r="10.900" fill="#fff" stroke="#c0c0c0" stroke-width="1"/><path d="M16.0 7.6L16.0 5.6" stroke="#000" stroke-width="1.100"/><path d="M20.1 8.7L21.1 7.0" stroke="#000" stroke-width="1.100"/><path d="M23.2 11.8L24.9 10.8" stroke="#000" stroke-width="1.100"/><path d="M24.3 15.9L26.3 15.9" stroke="#000" stroke-width="1.100"/><path d="M23.2 20.0L24.9 21.0" stroke="#000" stroke-width="1.100"/><path d="M20.1 23.1L21.1 24.8" stroke="#000" stroke-width="1.100"/><path d="M16.0 24.2L16.0 26.2" stroke="#000" stroke-width="1.100"/><path d="M11.8 23.1L10.8 24.8" stroke="#000" stroke-width="1.100"/><path d="M8.8 20.1L7.1 21.1" stroke="#000" stroke-width="1.100"/><path d="M7.7 15.9L5.7 15.9" stroke="#000" stroke-width="1.100"/><path d="M8.8 11.8L7.1 10.8" stroke="#000" stroke-width="1.100"/><path d="M11.8 8.7L10.8 7.0" stroke="#000" stroke-width="1.100"/><path d="M11.400 11.300l4.800 5 6.500-5.800" fill="none" stroke="#000" stroke-width="2"/></svg>
<svg class="a" style="left:713px;top:80px" width="32" height="32" viewBox="0 0 32 32"><rect x=".5" y=".5" width="31" height="31" fill="#fff" stroke="#088" stroke-width="1"/><rect x="2.500" y="2.500" width="27" height="27" fill="#fff" stroke="#a8a8a8" stroke-width="1"/><path d="M8 25.700C1.500 19 5 6 16 6s14.500 13 8.500 19.700l-2.500-2-6.200-5-6 5z" fill="#fff" stroke="#000" stroke-width="1.500"/><path d="M15.800 18l-6.300 5.500C5.500 17.500 9 10.500 14.500 10z" fill="#f80000"/><path d="M15.800 18l6.800 5.500c3.400-6-.6-13.500-8.100-13.500z" fill="#0000f8"/><path d="M5 19h1.700M5.700 14.500l1.600.500M8.300 10.300l1.200 1.100M12 7.300l.6 1.500M16.200 6.200v1.700M20.500 7.300l-.6 1.500M24 10.300l-1.200 1.100M26.500 14.500l-1.600.500M27.200 19h-1.700" stroke="#000" stroke-width="1"/></svg>
<svg class="a" style="left:752px;top:80px" width="32" height="32" viewBox="0 0 32 32"><rect x=".5" y=".5" width="31" height="31" fill="#fff" stroke="#088" stroke-width="1"/><rect x="2.500" y="2.500" width="27" height="27" fill="#fff" stroke="#a8a8a8" stroke-width="1"/><path d="M5.300 5v21.300h21.700" fill="none" stroke="#000" stroke-width="1.400"/><rect x="13" y="10.100" width="6" height="15.600" fill="#f80000"/></svg>
<svg class="a" style="left:791px;top:80px" width="32" height="32" viewBox="0 0 32 32"><rect x=".5" y=".5" width="31" height="31" fill="#fff" stroke="#088" stroke-width="1"/><rect x="2.500" y="2.500" width="27" height="27" fill="#fff" stroke="#a8a8a8" stroke-width="1"/><path d="M5.300 5v21.300h21.700" fill="none" stroke="#000" stroke-width="1.400"/><path d="M5.800 22.600l13-13.300 4.500 5 3.800-4" fill="none" stroke="#0000f8" stroke-width="1.400"/><path d="M5.800 15.900l5.900-5.400 10.800 12.100 3.300-4.200" fill="none" stroke="#f80000" stroke-width="1.400"/></svg>
<svg class="a" style="left:830px;top:80px" width="32" height="32" viewBox="0 0 32 32"><rect x=".5" y=".5" width="31" height="31" fill="#fff" stroke="#088" stroke-width="1"/><rect x="2.500" y="2.500" width="27" height="27" fill="#fff" stroke="#a8a8a8" stroke-width="1"/><path d="M4.500 8.500l3-4h19.300l-3.500 4z" fill="#f0f0f0" stroke="#909090" stroke-width=".600"/><path d="M23.300 8.500l3.500-4v13.500l-3.500 4z" fill="#a0a020"/><path d="M23.300 13.500l3.500-4v6.500l-3.500 4z" fill="#000090"/><rect x="4.500" y="8.500" width="18.800" height="5" fill="#e0e0e0"/><rect x="4.500" y="13.500" width="18.800" height="6.500" fill="#0000d0"/><path d="M4.500 20h18.800l3.500-2v2l-3.500 2h-18.800z" fill="#a0a020"/><rect x="7" y="10" width="5.500" height="3" fill="#30e0e0" stroke="#808080" stroke-width=".500"/><rect x="17.500" y="10" width="3" height="1.800" fill="#000"/><rect x="5" y="15" width="8.500" height="4" fill="#000080"/><path d="M14.700 8.500v11.500" stroke="#000" stroke-width=".900"/><rect x="19.300" y="2.500" width="2" height="2" fill="#f80000"/><rect x="19.300" y="4.500" width="2" height="1.500" fill="#f0e000"/><rect x="19.300" y="6" width="2" height="2" fill="#00d000"/><text x="14.5" y="27.7" font-family="Liberation Sans,sans-serif" font-size="6.8" font-weight="700" fill="#000" stroke="#000" stroke-width=".350" text-anchor="middle" textLength="15.5" lengthAdjust="spacingAndGlyphs">BMP</text></svg>
<svg class="a" style="left:869px;top:80px" width="32" height="32" viewBox="0 0 32 32"><rect x=".5" y=".5" width="31" height="31" fill="#fff" stroke="#088" stroke-width="1"/><rect x="2.500" y="2.500" width="27" height="27" fill="#fff" stroke="#a8a8a8" stroke-width="1"/><rect x="4.900" y="4.900" width="12.500" height="10" rx="1" fill="#fff" stroke="#000" stroke-width="1.500"/><rect x="6.800" y="6.800" width="8.700" height="6.200" fill="#ffff70"/><path d="M5 16h12" stroke="#000" stroke-width="1" stroke-dasharray="1 1"/><rect x="15.500" y="16.500" width="12.300" height="10.700" rx="1" fill="#fff" stroke="#000" stroke-width="1.500"/><rect x="17.300" y="18.500" width="8.500" height="6.500" fill="#70f0f0"/><path d="M19.500 8l6.500 7" fill="none" stroke="#0000f8" stroke-width="2.200"/><path d="M17.500 5.500l5.500.500-4 4zM28 17l-5.500-.500 4.500-4z" fill="#0000f8"/><text x="11.3" y="27.7" font-family="Liberation Sans,sans-serif" font-size="6.8" font-weight="700" fill="#000" stroke="#000" stroke-width=".350" text-anchor="middle" textLength="14" lengthAdjust="spacingAndGlyphs">BMP</text></svg>
<svg class="a" style="left:908px;top:80px" width="32" height="32" viewBox="0 0 32 32"><rect x=".5" y=".5" width="31" height="31" fill="#fff" stroke="#088" stroke-width="1"/><rect x="2.500" y="2.500" width="27" height="27" fill="#fff" stroke="#a8a8a8" stroke-width="1"/><rect x="5.500" y="5.500" width="22" height="22" fill="#fff" stroke="#f8f000" stroke-width="1.200"/><path d="M27.200 5v22.200h-22" fill="none" stroke="#000" stroke-width="1.800"/><ellipse cx="16" cy="14" rx="8.700" ry="6.500" fill="#fff" stroke="#0000a0" stroke-width="1.200"/><circle cx="10.800" cy="15" r="1.700" fill="#000080"/><ellipse cx="14" cy="10.300" rx="2.500" ry="1.300" fill="#008080"/><ellipse cx="21.500" cy="15" rx="1.900" ry="2.400" fill="#00e800"/><ellipse cx="15.500" cy="18" rx="3" ry="1.500" fill="#f80000"/><path d="M26.500 5.500l-7.500 7" fill="none" stroke="#800000" stroke-width="1.500"/><path d="M19.500 12l-4 2.500" stroke="#808000" stroke-width="2.200"/><text x="15.5" y="26" font-family="Liberation Sans,sans-serif" font-size="6.8" font-weight="700" fill="#000" stroke="#000" stroke-width=".350" text-anchor="middle" textLength="14.5" lengthAdjust="spacingAndGlyphs">BMP</text><path d="M8 27.200h17" stroke="#000" stroke-width=".900"/></svg>
<svg class="a" style="left:947px;top:80px" width="32" height="32" viewBox="0 0 32 32"><rect x=".5" y=".5" width="31" height="31" fill="#fff" stroke="#088" stroke-width="1"/><rect x="2.500" y="2.500" width="27" height="27" fill="#fff" stroke="#a8a8a8" stroke-width="1"/><path d="M17.6 3.1L18.5 -0.1" stroke="#f8f000" stroke-width="1.200" stroke-dasharray="1.500 1"/><path d="M21.3 5.2L23.6 2.9" stroke="#f8f000" stroke-width="1.200" stroke-dasharray="1.500 1"/><path d="M23.4 8.9L26.6 8.0" stroke="#f8f000" stroke-width="1.200" stroke-dasharray="1.500 1"/><path d="M23.4 13.1L26.6 14.0" stroke="#f8f000" stroke-width="1.200" stroke-dasharray="1.500 1"/><path d="M7.6 13.1L4.4 14.0" stroke="#f8f000" stroke-width="1.200" stroke-dasharray="1.500 1"/><path d="M7.6 8.9L4.4 8.0" stroke="#f8f000" stroke-width="1.200" stroke-dasharray="1.500 1"/><path d="M9.7 5.2L7.4 2.9" stroke="#f8f000" stroke-width="1.200" stroke-dasharray="1.500 1"/><path d="M13.4 3.1L12.5 -0.1" stroke="#f8f000" stroke-width="1.200" stroke-dasharray="1.500 1"/><circle cx="15.500" cy="10.200" r="6.200" fill="#ffff70" stroke="#d8d000" stroke-width="1" stroke-dasharray="1.500 .800"/><path d="M14.300 11v5.500M16.700 11v5.500" stroke="#fff" stroke-width="1"/><path d="M12.500 17h6M12.500 19h6M13.300 21h4.500" stroke="#a01818" stroke-width="1.500"/><text x="15.4" y="27.7" font-family="Liberation Sans,sans-serif" font-size="6.8" font-weight="700" fill="#000" stroke="#000" stroke-width=".350" text-anchor="middle" textLength="15" lengthAdjust="spacingAndGlyphs">BMP</text></svg>
<svg class="a" style="left:986px;top:80px" width="32" height="32" viewBox="0 0 32 32"><rect x=".5" y=".5" width="31" height="31" fill="#fff" stroke="#088" stroke-width="1"/><rect x="2.500" y="2.500" width="27" height="27" fill="#fff" stroke="#a8a8a8" stroke-width="1"/><circle cx="16" cy="15.900" r="11.400" fill="#fff" stroke="#000" stroke-width="1.100"/><circle cx="16" cy="15.900" r="8.800" fill="#008000" stroke="#000" stroke-width="1.100"/></svg>
<svg class="a" style="left:1025px;top:80px" width="32" height="32" viewBox="0 0 32 32"><rect x=".5" y=".5" width="31" height="31" fill="#fff" stroke="#088" stroke-width="1"/><rect x="2.500" y="2.500" width="27" height="27" fill="#fff" stroke="#a8a8a8" stroke-width="1"/><path d="M5.300 17.800l3.200-3 4.700 3.800 13.300-11.300 2.300 3.800-15.300 15z" fill="#008000"/></svg>
<svg class="a" style="left:1064px;top:80px" width="32" height="32" viewBox="0 0 32 32"><rect x=".5" y=".5" width="31" height="31" fill="#fff" stroke="#088" stroke-width="1"/><rect x="2.500" y="2.500" width="27" height="27" fill="#fff" stroke="#a8a8a8" stroke-width="1"/><rect x="4.700" y="4.700" width="23" height="23" fill="#fff" stroke="#000" stroke-width="1.400"/><path d="M4.700 10.500h17M4.700 15h17M4.700 19.500h17M4.700 24h17M21.700 4.700v23" stroke="#000" stroke-width="1.200"/><path d="M21.700 9.500h6M21.700 11.500h6M21.700 22.500h6" stroke="#000" stroke-width="1"/><path d="M23 8l1.700-2 1.700 2zM23 24.500l1.700 2 1.700-2z" fill="#000"/></svg>
<svg class="a" style="left:1103px;top:80px" width="32" height="32" viewBox="0 0 32 32"><rect x=".5" y=".5" width="31" height="31" fill="#fff" stroke="#088" stroke-width="1"/><rect x="2.500" y="2.500" width="27" height="27" fill="#fff" stroke="#a8a8a8" stroke-width="1"/><rect x="4.700" y="13.700" width="23" height="7" fill="#fff" stroke="#000" stroke-width="1.400"/><path d="M22.500 13.700v7" stroke="#000" stroke-width="1.200"/><path d="M23.600 16.200l1.700 2 1.700-2z" fill="#000"/></svg>
<svg class="a" style="left:1142px;top:80px" width="32" height="32" viewBox="0 0 32 32"><rect x=".5" y=".5" width="31" height="31" fill="#fff" stroke="#088" stroke-width="1"/><rect x="2.500" y="2.500" width="27" height="27" fill="#fff" stroke="#a8a8a8" stroke-width="1"/><path d="M5.800 6v20" stroke="#000" stroke-width="2.200"/><path d="M7 8h3M7 12h3M7 16h3M7 20h3M7 24h3" stroke="#000" stroke-width="1"/></svg>
<div class="a" style="left:8px;top:118px;width:23px;height:20px;background:#cce8ff;border:1px solid #99d1ff"></div>
<svg class="a" style="left:12px;top:121px" width="16" height="16" viewBox="0 0 16 16"><path d="M1.500 1.500l3 11 2.500-3 4 4.500 2.500-2.500-4.500-4 3.500-2z" fill="#fff" stroke="#000" stroke-width="1.100"/></svg>
<svg class="a" style="left:34px;top:121px" width="16" height="16" viewBox="0 0 16 16"><path d="M1 1.500l13.500 12.500" stroke="#000" stroke-width="1.200"/></svg>
<svg class="a" style="left:58px;top:123px" width="15" height="13" viewBox="0 0 15 13"><rect x=".6" y=".6" width="12" height="9.800" fill="#808000" stroke="#000" stroke-width="1.200"/></svg>
<svg class="a" style="left:80px;top:122px" width="15" height="13" viewBox="0 0 15 13"><path d="M1.500 6.500c1-6 10-6.500 12 0 .3 1.500.3 3.500 0 5" fill="none" stroke="#000" stroke-width="1.200"/></svg>
<svg class="a" style="left:103px;top:121px" width="15" height="15" viewBox="0 0 15 15"><circle cx="7.200" cy="7.200" r="6.200" fill="#808000" stroke="#000" stroke-width="1"/></svg>
<svg class="a" style="left:126px;top:122px" width="16" height="13" viewBox="0 0 16 13"><ellipse cx="8" cy="6.500" rx="6.600" ry="4.800" fill="#808000" stroke="#000" stroke-width="1"/></svg>
<div class="t" style="left:149px;top:120px;font-size:18px;width:15px;text-align:center">A</div>
<div class="a" style="left:169px;top:118px;width:1px;height:22px;background:#c8c8c8"></div>
<!-- left_panels.html -->
<!-- left tree dock panel -->
<div class="a" style="left:2px;top:146px;width:260px;height:1px;background:#a0a0a0"></div>
<div class="a" style="left:2px;top:147px;width:260px;height:1px;background:#fff"></div>
<div class="a" style="left:173px;top:150px;width:87px;height:18px;background:#e1e1e1;border:1px solid #adadad"></div>
<div class="t" style="left:198px;top:154px;font-size:11px">Update</div>
<div class="a" style="left:4px;top:173px;width:257px;height:840px;background:#fff;border:1px solid #828790"></div>
<div class="a" style="left:263px;top:142px;width:1px;height:876px;background:#fff"></div>
<div class="a" style="left:2px;top:1018px;width:262px;height:1px;background:#a0a0a0"></div>
<!-- tree -->
<div class="a" style="left:13px;top:179px;width:9px;height:9px;border:1px solid #a0a0a0;border-radius:1.5px;background:#fff"></div>
<div class="a" style="left:15px;top:183px;width:5px;height:1px;background:#3b59a5"></div>
<div class="a" style="left:23px;top:183px;width:5px;height:0;border-top:1px dotted #808080"></div>
<div class="a" style="left:36px;top:190px;width:0;height:9px;border-left:1px dotted #808080"></div>
<div class="a" style="left:36px;top:198px;width:11px;height:0;border-top:1px dotted #808080"></div>
<svg class="a" style="left:28px;top:175px" width="16" height="16" viewBox="0 0 16 16"><rect x=".8" y=".8" width="11.400" height="10.800" fill="#0ff" stroke="#f4f000" stroke-width="1.400"/><rect x="3" y="5" width="12" height="8.600" fill="#b8b8b8"/><path d="M3 13.600h12" stroke="#8c8c8c" stroke-width="1"/><path d="M5.800 10h6.400v2.500c0 1.800-1.400 2.800-3.200 2.800s-3.200-1-3.200-2.800z" fill="#e80000"/><path d="M6.500 9.800c.5-1.200 4.500-1.200 5 0" fill="none" stroke="#909090" stroke-width=".900"/><path d="M6.500 14c1.500 1 3.500 1 5 0" fill="none" stroke="#900000" stroke-width="1"/></svg>
<div class="t" style="left:49px;top:178px;font-size:11px;letter-spacing:.5px">1111</div>
<svg class="a" style="left:47px;top:191px" width="16" height="16" viewBox="0 0 16 16"><rect x="0.7" y="0.7" width="14.6" height="14.6" rx="2.2" fill="#fff" stroke="#000" stroke-width="1.4"/><rect x="3" y="3" width="10" height="8" fill="#3ce65a"/><path d="M3 13h10" stroke="#000" stroke-width="1.4" stroke-dasharray="1.4 .8"/></svg>
<div class="t" style="left:67px;top:194px;font-size:11px;letter-spacing:-.15px">FPicture1</div>

<!-- mdi.html -->
<!-- MDI client -->
<div class="a" style="left:264px;top:141px;width:662px;height:877px;background:#696969;overflow:hidden;border-left:1px solid #a0a0a0;border-top:1px solid #a0a0a0"><div class="a" style="left:1px;top:1px;width:700px;height:900px;background:#ababab"></div><div class="a" style="left:1px;top:1px;width:700px;height:900px">
 <div class="a" style="left:0;top:4px;width:1px;height:594px;background:#000"></div>
 <!-- child window: coordinates relative to (267,143) -->
 <div class="a" style="left:1px;top:0;width:700px;height:598px;background:#b9d1ea;border-radius:5px 0 0 0">
  <div class="a" style="left:0;top:0;width:700px;height:34px;border-radius:5px 0 0 0;background:linear-gradient(#98b3d2,#a9c2e0 45%,#bed4ec 100%)"></div>
  <div class="a" style="left:0;top:0;width:700px;height:598px;border-left:1px solid #f4f8fc;border-top:1px solid #f4f8fc;border-radius:5px 0 0 0"></div>
  <svg class="a" style="left:9px;top:10px" width="16" height="16" viewBox="0 0 16 16"><rect x="0.7" y="0.7" width="14.6" height="14.6" rx="2.2" fill="#fff" stroke="#000" stroke-width="1.4"/><rect x="3" y="3" width="10" height="8" fill="#ffff50"/><path d="M3 13h10" stroke="#000" stroke-width="1.4" stroke-dasharray="1.4 .8"/></svg>
  <div class="t" style="left:29px;top:13px;font-size:12px">FPicture1.xml</div>
  <!-- client -->
  <div class="a" style="left:7px;top:30px;width:700px;height:559px;background:#fff;border-left:2px solid #858a90;border-top:2px solid #70757c"></div>
  <div class="a" style="left:9px;top:32px;width:640px;height:480px;background:#000"></div>
  <!-- button control -->
  <div class="a" style="left:410px;top:381px;width:214px;height:47px;background:linear-gradient(#dcdcdc,#d4d4d4 40%,#bebebe);border-left:2px solid #fff;border-top:2px solid #fff"></div>
  <div class="t" style="left:412.900px;top:382.400px;font-size:15px;letter-spacing:-.38px;color:#111">12345678901234567890123456</div>
  <div class="a" style="left:7px;top:588px;width:700px;height:1px;background:#e6e6e6"></div>
  <div class="a" style="left:7px;top:589px;width:700px;height:1px;background:#fff"></div>
  <div class="a" style="left:0;top:596px;width:700px;height:1px;background:#19c5e6"></div>
  <div class="a" style="left:0;top:597px;width:700px;height:1px;background:#222"></div>
 </div>
 <!-- mouse cursor -->
 <svg class="a" style="left:330px;top:216px" width="13" height="21" viewBox="0 0 13 21"><path d="M1 1v16l3.8-3.6 2.7 6.2 2.2-1-2.7-6H12z" fill="#fff" stroke="#000" stroke-width="1"/></svg>
</div></div>

<!-- props.html -->
<!-- property dock panel -->
<div class="a" style="left:926px;top:142px;width:5px;height:876px;background:linear-gradient(90deg,#fdfdfd,#e4e4e4)"></div>
<div class="a" style="left:929px;top:146px;width:221px;height:1px;background:#a0a0a0"></div>
<div class="a" style="left:929px;top:147px;width:221px;height:1px;background:#fff"></div>
<div class="a" style="left:931px;top:154px;width:202px;height:20px;background:#e1e1e1;border:1px solid #adadad"></div>
<div class="t" style="left:935px;top:159px;font-size:11px;letter-spacing:-.2px">FPicture1.xml</div>
<svg class="a" style="left:1118px;top:161px" width="10" height="6" viewBox="0 0 10 6"><path d="M1 .8l4 4 4-4" fill="none" stroke="#444" stroke-width="1.1"/></svg>
<div class="a" style="left:1134px;top:155px;width:14px;height:18px;background:#e1e1e1;border:1px solid #adadad"></div>
<div class="t" style="left:1136px;top:157px;font-size:11px;letter-spacing:.5px">...</div>
<div class="a" style="left:931px;top:177px;width:218px;height:836px;background:#fff;border:1px solid #828790"></div>
<div class="a" style="left:1052px;top:179px;width:1px;height:400px;background:#ececec"></div>
<div class="a" style="left:1132px;top:179px;width:1px;height:400px;background:#ececec"></div>
<div class="t" style="left:939px;top:186px;font-size:11px">Property</div>
<div class="t" style="left:1058px;top:186px;font-size:11px">Value</div>
<div class="t" style="left:939px;top:207px;width:113px;overflow:hidden;font-size:11px;letter-spacing:-.22px">Tab index</div>
<div class="t" style="left:1055px;top:207px;font-size:11px">0</div>
<div class="a" style="left:933px;top:220px;width:200px;height:1px;background:#ececec"></div>
<div class="t" style="left:939px;top:225px;width:113px;overflow:hidden;font-size:11px;letter-spacing:-.22px">Comment</div>
<div class="a" style="left:933px;top:238px;width:200px;height:1px;background:#ececec"></div>
<div class="t" style="left:939px;top:243px;width:113px;overflow:hidden;font-size:11px;letter-spacing:-.22px">Background color</div>
<div class="t" style="left:1055px;top:243px;font-size:11px">0</div>
<div class="a" style="left:933px;top:256px;width:200px;height:1px;background:#ececec"></div>
<div class="t" style="left:939px;top:261px;width:113px;overflow:hidden;font-size:11px;letter-spacing:-.22px">Not use background color</div>
<div class="t" style="left:1055px;top:261px;font-size:11px">OFF</div>
<div class="a" style="left:933px;top:274px;width:200px;height:1px;background:#ececec"></div>
<div class="t" style="left:939px;top:279px;width:113px;overflow:hidden;font-size:11px;letter-spacing:-.22px">Use signal of notice screen</div>
<div class="t" style="left:1055px;top:279px;font-size:11px">OFF</div>
<div class="a" style="left:933px;top:292px;width:200px;height:1px;background:#ececec"></div>
<div class="t" style="left:939px;top:297px;width:113px;overflow:hidden;font-size:11px;letter-spacing:-.22px">Use enable signal of each</div>
<div class="t" style="left:1055px;top:297px;font-size:11px">OFF</div>
<div class="a" style="left:933px;top:310px;width:200px;height:1px;background:#ececec"></div>
<div class="t" style="left:939px;top:315px;width:113px;overflow:hidden;font-size:11px;letter-spacing:-.22px">Screen Number</div>
<div class="t" style="left:1055px;top:315px;font-size:11px">0</div>
<div class="a" style="left:933px;top:328px;width:200px;height:1px;background:#ececec"></div>
<div class="t" style="left:939px;top:333px;width:113px;overflow:hidden;font-size:11px;letter-spacing:-.22px">Screen Number Symbol</div>
<div class="a" style="left:933px;top:346px;width:200px;height:1px;background:#ececec"></div>
<div class="t" style="left:939px;top:351px;width:113px;overflow:hidden;font-size:11px;letter-spacing:-.22px">Step at right key pushed</div>
<div class="t" style="left:1055px;top:351px;font-size:11px">0</div>
<div class="a" style="left:933px;top:364px;width:200px;height:1px;background:#ececec"></div>
<div class="t" style="left:939px;top:369px;width:113px;overflow:hidden;font-size:11px;letter-spacing:-.22px">Step at down key pushed</div>
<div class="t" style="left:1055px;top:369px;font-size:11px">0</div>
<div class="a" style="left:933px;top:382px;width:200px;height:1px;background:#ececec"></div>
<div class="t" style="left:939px;top:387px;width:113px;overflow:hidden;font-size:11px;letter-spacing:-.22px">Continuous input</div>
<div class="t" style="left:1055px;top:387px;font-size:11px">OFF</div>
<div class="a" style="left:933px;top:400px;width:200px;height:1px;background:#ececec"></div>
<div class="t" style="left:939px;top:405px;width:113px;overflow:hidden;font-size:11px;letter-spacing:-.22px">Composite Screen Name</div>
<div class="a" style="left:933px;top:418px;width:200px;height:1px;background:#ececec"></div>
<div class="t" style="left:939px;top:423px;width:113px;overflow:hidden;font-size:11px;letter-spacing:-.22px">Composite Screen Name</div>
<div class="a" style="left:933px;top:436px;width:200px;height:1px;background:#ececec"></div>
<div class="t" style="left:939px;top:441px;width:113px;overflow:hidden;font-size:11px;letter-spacing:-.22px">Composite Screen Name</div>
<div class="a" style="left:933px;top:454px;width:200px;height:1px;background:#ececec"></div>
<div class="t" style="left:939px;top:459px;width:113px;overflow:hidden;font-size:11px;letter-spacing:-.22px">Composite Screen Name</div>
<div class="a" style="left:933px;top:472px;width:200px;height:1px;background:#ececec"></div>
<div class="t" style="left:939px;top:477px;width:113px;overflow:hidden;font-size:11px;letter-spacing:-.22px">Composite Screen Name</div>
<div class="a" style="left:933px;top:490px;width:200px;height:1px;background:#ececec"></div>
<div class="t" style="left:939px;top:495px;width:113px;overflow:hidden;font-size:11px;letter-spacing:-.22px">Composite Screen Name</div>
<div class="a" style="left:933px;top:508px;width:200px;height:1px;background:#ececec"></div>
<div class="t" style="left:939px;top:513px;width:113px;overflow:hidden;font-size:11px;letter-spacing:-.22px">Composite Screen Name</div>
<div class="a" style="left:933px;top:526px;width:200px;height:1px;background:#ececec"></div>
<div class="t" style="left:939px;top:531px;width:113px;overflow:hidden;font-size:11px;letter-spacing:-.22px">Composite Screen Name</div>
<div class="a" style="left:933px;top:544px;width:200px;height:1px;background:#ececec"></div>
<div class="t" style="left:939px;top:549px;width:113px;overflow:hidden;font-size:11px;letter-spacing:-.22px">Composite Screen Name</div>
<div class="a" style="left:933px;top:562px;width:200px;height:1px;background:#ececec"></div>
<div class="t" style="left:939px;top:567px;width:113px;overflow:hidden;font-size:11px;letter-spacing:-.22px">Composite Screen Name</div>
<div class="a" style="left:933px;top:580px;width:200px;height:1px;background:#ececec"></div>
<div class="a" style="left:928px;top:1018px;width:222px;height:1px;background:#a0a0a0"></div>
<!-- right_frame.html -->
<!-- right window (HTML Help) -->
<div class="a" style="left:1142px;top:0;width:8px;height:1036px;background:linear-gradient(90deg,rgba(0,0,0,0),rgba(0,0,0,.05) 50%,rgba(0,0,0,.16))"></div>
<div class="a" style="left:1912px;top:0;width:8px;height:1036px;background:linear-gradient(90deg,#707070,#8a8a8a 40%,#a6a6a6 85%,#a6a6a6)"></div>
<div class="a" style="left:1912px;top:4px;width:7px;height:51px;background:linear-gradient(90deg,#c8c8c8,#f2f2f2)"></div>
<div class="a" style="left:1912px;top:1007px;width:8px;height:29px;background:#0b2f8f"></div>
<div class="a" style="left:1919px;top:0;width:1px;height:1036px;background:#12337f"></div>
<div class="a" style="left:1912px;top:0;width:8px;height:4px;background:#0d3a9c"></div>
<div class="a" style="left:1149px;top:1px;width:1px;height:1035px;background:#a8a8a8"></div>
<div class="a" style="left:1150px;top:0;width:762px;height:1036px;background:#f0f0f0"></div>
<div class="a" style="left:1150px;top:0;width:762px;height:31px;background:#fff"></div>
<div class="a" style="left:1150px;top:0;width:770px;height:1px;background:#1d3a80"></div>
<div class="t" style="left:1179.500px;top:9.400px;font-size:12px;color:#999;letter-spacing:-.3px">FANUC PICTURE</div>
<div class="a" style="left:1793px;top:15px;width:10px;height:1px;background:#999"></div>
<div class="a" style="left:1838px;top:10px;width:10px;height:10px;border:1px solid #999"></div>
<svg class="a" style="left:1884px;top:10px" width="11" height="11" viewBox="0 0 11 11"><path d="M.3.300L9.900 9.900M9.900.300L.3 9.900" stroke="#8a8a8a" stroke-width="1" fill="none"/></svg>
<div class="a" style="left:1150px;top:73px;width:762px;height:1px;background:#a0a0a0"></div>
<!-- help title icon -->
<svg class="a" style="left:1158px;top:7px" width="16" height="16" viewBox="0 0 16 16"><path d="M.5 5.500h7.500l1.500 1.500v8.500h-9z" fill="#fff" stroke="#000" stroke-width="1"/><path d="M2.500 8.500h4M2.500 10.500h5M2.500 12.500h5" stroke="#555" stroke-width=".900"/><path d="M8 4.200c0-2 1.300-2.900 3-2.900s3 .900 3 2.500c0 2.100-2.600 2.200-2.600 4.400" fill="none" stroke="#000" stroke-width="3.800" stroke-linecap="round"/><circle cx="11.300" cy="12.300" r="2.300" fill="#000"/><path d="M8 4.200c0-2 1.300-2.900 3-2.900s3 .900 3 2.500c0 2.100-2.600 2.200-2.600 4.400" fill="none" stroke="#f6ee18" stroke-width="2" stroke-linecap="round"/><circle cx="11.300" cy="12.300" r="1.400" fill="#f6ee18"/></svg>
<!-- help toolbar icons -->
<svg class="a" style="left:1164px;top:35px" width="21" height="18" viewBox="0 0 21 18"><rect x="3.600" y=".6" width="16" height="16.600" fill="#fff" stroke="#000" stroke-width="1.200"/><rect x="3.600" y=".6" width="16" height="2.400" fill="#555"/><rect x="4.200" y="3.500" width="5" height="13.200" fill="#c4c4c4"/><path d="M9.700 3v14" stroke="#000" stroke-width="1"/><path d="M12 6h6M12 8h5M12 10h6M12 12h5M12 14h6" stroke="#777" stroke-width=".800"/><path d="M.5 6.500h5v-2.500l4.500 4.500-4.500 4.500v-2.500h-5z" fill="#fff" stroke="#000" stroke-width="1"/></svg>
<svg class="a" style="left:1214px;top:37px" width="17" height="15" viewBox="0 0 17 15"><path d="M1 7.500l6.500-6.300v3.800h8v5h-8v3.800z" fill="#fff" stroke="#000" stroke-width="1.100"/></svg>
<svg class="a" style="left:1261px;top:35px" width="22" height="19" viewBox="0 0 22 19"><path d="M5.500 7l2.500-6h10l-2 6" fill="#fff" stroke="#000" stroke-width="1.100"/><path d="M8.500 3h7M8 4.700h7" stroke="#444" stroke-width=".800"/><path d="M1.500 9.500c0-1.500 1-2.500 2.500-2.500h14c1.500 0 2.500.500 2.500 2v4l-3 4.500h-14c-1 0-2-1-2-2z" fill="#fff" stroke="#000" stroke-width="1.200"/><path d="M1.500 12.500h16l3-3.500M17.500 12.500v5" fill="none" stroke="#000" stroke-width="1.100"/><path d="M2 14.800h15.500" stroke="#000" stroke-width="1.600"/><rect x="9.500" y="13.200" width="4.500" height="1" fill="#777"/><path d="M17.500 12.500l3-3.500v4l-3 4.500z" fill="#a0a0a0" stroke="#000" stroke-width=".800"/></svg>
<svg class="a" style="left:1311px;top:35px" width="21" height="18" viewBox="0 0 21 18"><rect x=".7" y="4" width="11.500" height="13.300" fill="#fff" stroke="#000" stroke-width="1.300"/><rect x="3" y="6" width="6.500" height="9" fill="#fff" stroke="#000" stroke-width="1"/><path d="M4.500 9h3.500M4.500 11h3.500M4.500 13h3.500" stroke="#555" stroke-width=".800"/><path d="M6 4.500l4-3 5-1 1.500 2.500-1 3-3.500-1-2 3" fill="#d8d8d8" stroke="#000" stroke-width=".900"/><path d="M15.500 10h5l-2.500 2.800z" fill="#000"/></svg>
<!-- toolbar labels -->
<div class="t" style="left:1162.500px;top:57px;font-size:12px">隱藏</div>
<div class="t" style="left:1205.500px;top:57px;font-size:12px">上一頁</div>
<div class="t" style="left:1260.500px;top:57px;font-size:12px">列印</div>
<div class="t" style="left:1300.500px;top:57px;font-size:12px">選項(<u>O</u>)</div>
<!-- nav pane -->
<div class="a" style="left:1365px;top:74px;width:1px;height:962px;background:#a0a0a0"></div>
<div class="a" style="left:1366px;top:74px;width:1px;height:962px;background:#fff"></div>
<div class="a" style="left:1150px;top:117px;width:204px;height:919px;background:#fff"></div>
<div class="a" style="left:1150px;top:89px;width:64px;height:29px;background:#fff"></div>
<div class="a" style="left:1214px;top:91px;width:59px;height:26px;background:#f0f0f0;border:1px solid #d9d9d9;border-bottom:none"></div>
<div class="a" style="left:1273px;top:91px;width:58px;height:26px;background:#f0f0f0;border:1px solid #d9d9d9;border-left:none;border-bottom:none"></div>
<div class="t" style="left:1168px;top:97px;font-size:12px">內容(<u>C</u>)</div>
<div class="t" style="left:1226px;top:99px;font-size:12px">索引(<u>N</u>)</div>
<div class="t" style="left:1288px;top:99px;font-size:12px">搜尋(<u>S</u>)</div>

<!-- nav.html -->
<!-- nav tree -->
<div class="a" style="left:1158px;top:123px;width:191px;height:908px;background:#fff;border:1px solid #828790"></div>
<div class="a" style="left:1160px;top:125px;width:187px;height:904px;border:1px solid #696969;border-right-color:#e3e3e3;border-bottom-color:#e3e3e3"></div>
<div class="a" id="navlist" style="left:1160px;top:126px;width:169px;height:885px;overflow:hidden">
<svg class="a" style="left:65px;top:1px" width="12" height="15" viewBox="0 0 12 15"><path d="M.5 .5h8l3 3v11H.5z" fill="#fff" stroke="#000" stroke-width="1"/><path d="M.5 14.5h11V4" fill="none" stroke="#000" stroke-width="1.6"/><path d="M1.5 1.5h6.5M1.5 1.5v12" stroke="#e6e600" stroke-width="1" stroke-dasharray="1 1" fill="none"/><path d="M3 4h5M3 6.5h6M3 9h6M3 11.5h6" stroke="#1414e6" stroke-width="1.2"/></svg>
<div class="t" style="left:82px;top:3px;font-size:12.400px;letter-spacing:.3px;word-spacing:-1px">Read a P code variable</div>
<svg class="a" style="left:65px;top:19px" width="12" height="15" viewBox="0 0 12 15"><path d="M.5 .5h8l3 3v11H.5z" fill="#fff" stroke="#000" stroke-width="1"/><path d="M.5 14.5h11V4" fill="none" stroke="#000" stroke-width="1.6"/><path d="M1.5 1.5h6.5M1.5 1.5v12" stroke="#e6e600" stroke-width="1" stroke-dasharray="1 1" fill="none"/><path d="M3 4h5M3 6.5h6M3 9h6M3 11.5h6" stroke="#1414e6" stroke-width="1.2"/></svg>
<div class="t" style="left:82px;top:21px;font-size:12.400px;letter-spacing:.3px;word-spacing:-1px">Write a P code variable</div>
<svg class="a" style="left:65px;top:37px" width="12" height="15" viewBox="0 0 12 15"><path d="M.5 .5h8l3 3v11H.5z" fill="#fff" stroke="#000" stroke-width="1"/><path d="M.5 14.5h11V4" fill="none" stroke="#000" stroke-width="1.6"/><path d="M1.5 1.5h6.5M1.5 1.5v12" stroke="#e6e600" stroke-width="1" stroke-dasharray="1 1" fill="none"/><path d="M3 4h5M3 6.5h6M3 9h6M3 11.5h6" stroke="#1414e6" stroke-width="1.2"/></svg>
<div class="t" style="left:82px;top:39px;font-size:12.400px;letter-spacing:.3px;word-spacing:-1px">Read abnormal</div>
<svg class="a" style="left:65px;top:55px" width="12" height="15" viewBox="0 0 12 15"><path d="M.5 .5h8l3 3v11H.5z" fill="#fff" stroke="#000" stroke-width="1"/><path d="M.5 14.5h11V4" fill="none" stroke="#000" stroke-width="1.6"/><path d="M1.5 1.5h6.5M1.5 1.5v12" stroke="#e6e600" stroke-width="1" stroke-dasharray="1 1" fill="none"/><path d="M3 4h5M3 6.5h6M3 9h6M3 11.5h6" stroke="#1414e6" stroke-width="1.2"/></svg>
<div class="t" style="left:82px;top:57px;font-size:12.400px;letter-spacing:.3px;word-spacing:-1px">Read a path number</div>
<svg class="a" style="left:65px;top:73px" width="12" height="15" viewBox="0 0 12 15"><path d="M.5 .5h8l3 3v11H.5z" fill="#fff" stroke="#000" stroke-width="1"/><path d="M.5 14.5h11V4" fill="none" stroke="#000" stroke-width="1.6"/><path d="M1.5 1.5h6.5M1.5 1.5v12" stroke="#e6e600" stroke-width="1" stroke-dasharray="1 1" fill="none"/><path d="M3 4h5M3 6.5h6M3 9h6M3 11.5h6" stroke="#1414e6" stroke-width="1.2"/></svg>
<div class="t" style="left:82px;top:75px;font-size:12.400px;letter-spacing:.3px;word-spacing:-1px">Write tool offset</div>
<svg class="a" style="left:65px;top:91px" width="12" height="15" viewBox="0 0 12 15"><path d="M.5 .5h8l3 3v11H.5z" fill="#fff" stroke="#000" stroke-width="1"/><path d="M.5 14.5h11V4" fill="none" stroke="#000" stroke-width="1.6"/><path d="M1.5 1.5h6.5M1.5 1.5v12" stroke="#e6e600" stroke-width="1" stroke-dasharray="1 1" fill="none"/><path d="M3 4h5M3 6.5h6M3 9h6M3 11.5h6" stroke="#1414e6" stroke-width="1.2"/></svg>
<div class="t" style="left:82px;top:93px;font-size:12.400px;letter-spacing:.3px;word-spacing:-1px">Write parameter</div>
<svg class="a" style="left:65px;top:109px" width="12" height="15" viewBox="0 0 12 15"><path d="M.5 .5h8l3 3v11H.5z" fill="#fff" stroke="#000" stroke-width="1"/><path d="M.5 14.5h11V4" fill="none" stroke="#000" stroke-width="1.6"/><path d="M1.5 1.5h6.5M1.5 1.5v12" stroke="#e6e600" stroke-width="1" stroke-dasharray="1 1" fill="none"/><path d="M3 4h5M3 6.5h6M3 9h6M3 11.5h6" stroke="#1414e6" stroke-width="1.2"/></svg>
<div class="t" style="left:82px;top:111px;font-size:12.400px;letter-spacing:.3px;word-spacing:-1px">Write setting parameter</div>
<svg class="a" style="left:65px;top:127px" width="12" height="15" viewBox="0 0 12 15"><path d="M.5 .5h8l3 3v11H.5z" fill="#fff" stroke="#000" stroke-width="1"/><path d="M.5 14.5h11V4" fill="none" stroke="#000" stroke-width="1.6"/><path d="M1.5 1.5h6.5M1.5 1.5v12" stroke="#e6e600" stroke-width="1" stroke-dasharray="1 1" fill="none"/><path d="M3 4h5M3 6.5h6M3 9h6M3 11.5h6" stroke="#1414e6" stroke-width="1.2"/></svg>
<div class="t" style="left:82px;top:129px;font-size:12.400px;letter-spacing:.3px;word-spacing:-1px">Read custom macro</div>
<svg class="a" style="left:65px;top:145px" width="12" height="15" viewBox="0 0 12 15"><path d="M.5 .5h8l3 3v11H.5z" fill="#fff" stroke="#000" stroke-width="1"/><path d="M.5 14.5h11V4" fill="none" stroke="#000" stroke-width="1.6"/><path d="M1.5 1.5h6.5M1.5 1.5v12" stroke="#e6e600" stroke-width="1" stroke-dasharray="1 1" fill="none"/><path d="M3 4h5M3 6.5h6M3 9h6M3 11.5h6" stroke="#1414e6" stroke-width="1.2"/></svg>
<div class="t" style="left:82px;top:147px;font-size:12.400px;letter-spacing:.3px;word-spacing:-1px">Write custom macro</div>
<svg class="a" style="left:65px;top:163px" width="12" height="15" viewBox="0 0 12 15"><path d="M.5 .5h8l3 3v11H.5z" fill="#fff" stroke="#000" stroke-width="1"/><path d="M.5 14.5h11V4" fill="none" stroke="#000" stroke-width="1.6"/><path d="M1.5 1.5h6.5M1.5 1.5v12" stroke="#e6e600" stroke-width="1" stroke-dasharray="1 1" fill="none"/><path d="M3 4h5M3 6.5h6M3 9h6M3 11.5h6" stroke="#1414e6" stroke-width="1.2"/></svg>
<div class="t" style="left:82px;top:165px;font-size:12.400px;letter-spacing:.3px;word-spacing:-1px">Read modal data</div>
<svg class="a" style="left:65px;top:181px" width="12" height="15" viewBox="0 0 12 15"><path d="M.5 .5h8l3 3v11H.5z" fill="#fff" stroke="#000" stroke-width="1"/><path d="M.5 14.5h11V4" fill="none" stroke="#000" stroke-width="1.6"/><path d="M1.5 1.5h6.5M1.5 1.5v12" stroke="#e6e600" stroke-width="1" stroke-dasharray="1 1" fill="none"/><path d="M3 4h5M3 6.5h6M3 9h6M3 11.5h6" stroke="#1414e6" stroke-width="1.2"/></svg>
<div class="t" style="left:82px;top:183px;font-size:12.400px;letter-spacing:.3px;word-spacing:-1px">Read operator's message</div>
<svg class="a" style="left:65px;top:199px" width="12" height="15" viewBox="0 0 12 15"><path d="M.5 .5h8l3 3v11H.5z" fill="#fff" stroke="#000" stroke-width="1"/><path d="M.5 14.5h11V4" fill="none" stroke="#000" stroke-width="1.6"/><path d="M1.5 1.5h6.5M1.5 1.5v12" stroke="#e6e600" stroke-width="1" stroke-dasharray="1 1" fill="none"/><path d="M3 4h5M3 6.5h6M3 9h6M3 11.5h6" stroke="#1414e6" stroke-width="1.2"/></svg>
<div class="t" style="left:82px;top:201px;font-size:12.400px;letter-spacing:.3px;word-spacing:-1px">Read operator's history</div>
<svg class="a" style="left:65px;top:217px" width="12" height="15" viewBox="0 0 12 15"><path d="M.5 .5h8l3 3v11H.5z" fill="#fff" stroke="#000" stroke-width="1"/><path d="M.5 14.5h11V4" fill="none" stroke="#000" stroke-width="1.6"/><path d="M1.5 1.5h6.5M1.5 1.5v12" stroke="#e6e600" stroke-width="1" stroke-dasharray="1 1" fill="none"/><path d="M3 4h5M3 6.5h6M3 9h6M3 11.5h6" stroke="#1414e6" stroke-width="1.2"/></svg>
<div class="t" style="left:82px;top:219px;font-size:12.400px;letter-spacing:.3px;word-spacing:-1px">Read program directory</div>
<svg class="a" style="left:65px;top:235px" width="12" height="15" viewBox="0 0 12 15"><path d="M.5 .5h8l3 3v11H.5z" fill="#fff" stroke="#000" stroke-width="1"/><path d="M.5 14.5h11V4" fill="none" stroke="#000" stroke-width="1.6"/><path d="M1.5 1.5h6.5M1.5 1.5v12" stroke="#e6e600" stroke-width="1" stroke-dasharray="1 1" fill="none"/><path d="M3 4h5M3 6.5h6M3 9h6M3 11.5h6" stroke="#1414e6" stroke-width="1.2"/></svg>
<div class="t" style="left:82px;top:237px;font-size:12.400px;letter-spacing:.3px;word-spacing:-1px">Read program contents</div>
<svg class="a" style="left:65px;top:253px" width="12" height="15" viewBox="0 0 12 15"><path d="M.5 .5h8l3 3v11H.5z" fill="#fff" stroke="#000" stroke-width="1"/><path d="M.5 14.5h11V4" fill="none" stroke="#000" stroke-width="1.6"/><path d="M1.5 1.5h6.5M1.5 1.5v12" stroke="#e6e600" stroke-width="1" stroke-dasharray="1 1" fill="none"/><path d="M3 4h5M3 6.5h6M3 9h6M3 11.5h6" stroke="#1414e6" stroke-width="1.2"/></svg>
<div class="t" style="left:82px;top:255px;font-size:12.400px;letter-spacing:.3px;word-spacing:-1px">Increment/decrement</div>
<svg class="a" style="left:65px;top:271px" width="12" height="15" viewBox="0 0 12 15"><path d="M.5 .5h8l3 3v11H.5z" fill="#fff" stroke="#000" stroke-width="1"/><path d="M.5 14.5h11V4" fill="none" stroke="#000" stroke-width="1.6"/><path d="M1.5 1.5h6.5M1.5 1.5v12" stroke="#e6e600" stroke-width="1" stroke-dasharray="1 1" fill="none"/><path d="M3 4h5M3 6.5h6M3 9h6M3 11.5h6" stroke="#1414e6" stroke-width="1.2"/></svg>
<div class="t" style="left:82px;top:273px;font-size:12.400px;letter-spacing:.3px;word-spacing:-1px">Delete specified program</div>
<svg class="a" style="left:65px;top:289px" width="12" height="15" viewBox="0 0 12 15"><path d="M.5 .5h8l3 3v11H.5z" fill="#fff" stroke="#000" stroke-width="1"/><path d="M.5 14.5h11V4" fill="none" stroke="#000" stroke-width="1.6"/><path d="M1.5 1.5h6.5M1.5 1.5v12" stroke="#e6e600" stroke-width="1" stroke-dasharray="1 1" fill="none"/><path d="M3 4h5M3 6.5h6M3 9h6M3 11.5h6" stroke="#1414e6" stroke-width="1.2"/></svg>
<div class="t" style="left:82px;top:291px;font-size:12.400px;letter-spacing:.3px;word-spacing:-1px">Search specified program</div>
<svg class="a" style="left:65px;top:307px" width="12" height="15" viewBox="0 0 12 15"><path d="M.5 .5h8l3 3v11H.5z" fill="#fff" stroke="#000" stroke-width="1"/><path d="M.5 14.5h11V4" fill="none" stroke="#000" stroke-width="1.6"/><path d="M1.5 1.5h6.5M1.5 1.5v12" stroke="#e6e600" stroke-width="1" stroke-dasharray="1 1" fill="none"/><path d="M3 4h5M3 6.5h6M3 9h6M3 11.5h6" stroke="#1414e6" stroke-width="1.2"/></svg>
<div class="t" style="left:82px;top:309px;font-size:12.400px;letter-spacing:.3px;word-spacing:-1px">Read executing program</div>
<svg class="a" style="left:65px;top:325px" width="12" height="15" viewBox="0 0 12 15"><path d="M.5 .5h8l3 3v11H.5z" fill="#fff" stroke="#000" stroke-width="1"/><path d="M.5 14.5h11V4" fill="none" stroke="#000" stroke-width="1.6"/><path d="M1.5 1.5h6.5M1.5 1.5v12" stroke="#e6e600" stroke-width="1" stroke-dasharray="1 1" fill="none"/><path d="M3 4h5M3 6.5h6M3 9h6M3 11.5h6" stroke="#1414e6" stroke-width="1.2"/></svg>
<div class="t" style="left:82px;top:327px;font-size:12.400px;letter-spacing:.3px;word-spacing:-1px">Read CNC status</div>
<svg class="a" style="left:65px;top:343px" width="12" height="15" viewBox="0 0 12 15"><path d="M.5 .5h8l3 3v11H.5z" fill="#fff" stroke="#000" stroke-width="1"/><path d="M.5 14.5h11V4" fill="none" stroke="#000" stroke-width="1.6"/><path d="M1.5 1.5h6.5M1.5 1.5v12" stroke="#e6e600" stroke-width="1" stroke-dasharray="1 1" fill="none"/><path d="M3 4h5M3 6.5h6M3 9h6M3 11.5h6" stroke="#1414e6" stroke-width="1.2"/></svg>
<div class="t" style="left:82px;top:345px;font-size:12.400px;letter-spacing:.3px;word-spacing:-1px">Read amount of</div>
<svg class="a" style="left:65px;top:361px" width="12" height="15" viewBox="0 0 12 15"><path d="M.5 .5h8l3 3v11H.5z" fill="#fff" stroke="#000" stroke-width="1"/><path d="M.5 14.5h11V4" fill="none" stroke="#000" stroke-width="1.6"/><path d="M1.5 1.5h6.5M1.5 1.5v12" stroke="#e6e600" stroke-width="1" stroke-dasharray="1 1" fill="none"/><path d="M3 4h5M3 6.5h6M3 9h6M3 11.5h6" stroke="#1414e6" stroke-width="1.2"/></svg>
<div class="t" style="left:82px;top:363px;font-size:12.400px;letter-spacing:.3px;word-spacing:-1px">Read FP driver version</div>
<svg class="a" style="left:65px;top:379px" width="12" height="15" viewBox="0 0 12 15"><path d="M.5 .5h8l3 3v11H.5z" fill="#fff" stroke="#000" stroke-width="1"/><path d="M.5 14.5h11V4" fill="none" stroke="#000" stroke-width="1.6"/><path d="M1.5 1.5h6.5M1.5 1.5v12" stroke="#e6e600" stroke-width="1" stroke-dasharray="1 1" fill="none"/><path d="M3 4h5M3 6.5h6M3 9h6M3 11.5h6" stroke="#1414e6" stroke-width="1.2"/></svg>
<div class="t" style="left:82px;top:381px;font-size:12.400px;letter-spacing:.3px;word-spacing:-1px">Read tool offset</div>
<svg class="a" style="left:65px;top:397px" width="12" height="15" viewBox="0 0 12 15"><path d="M.5 .5h8l3 3v11H.5z" fill="#fff" stroke="#000" stroke-width="1"/><path d="M.5 14.5h11V4" fill="none" stroke="#000" stroke-width="1.6"/><path d="M1.5 1.5h6.5M1.5 1.5v12" stroke="#e6e600" stroke-width="1" stroke-dasharray="1 1" fill="none"/><path d="M3 4h5M3 6.5h6M3 9h6M3 11.5h6" stroke="#1414e6" stroke-width="1.2"/></svg>
<div class="t" style="left:82px;top:399px;font-size:12.400px;letter-spacing:.3px;word-spacing:-1px">Write tool offset</div>
<svg class="a" style="left:65px;top:415px" width="12" height="15" viewBox="0 0 12 15"><path d="M.5 .5h8l3 3v11H.5z" fill="#fff" stroke="#000" stroke-width="1"/><path d="M.5 14.5h11V4" fill="none" stroke="#000" stroke-width="1.6"/><path d="M1.5 1.5h6.5M1.5 1.5v12" stroke="#e6e600" stroke-width="1" stroke-dasharray="1 1" fill="none"/><path d="M3 4h5M3 6.5h6M3 9h6M3 11.5h6" stroke="#1414e6" stroke-width="1.2"/></svg>
<div class="t" style="left:82px;top:417px;font-size:12.400px;letter-spacing:.3px;word-spacing:-1px">Read custom macro</div>
<svg class="a" style="left:65px;top:433px" width="12" height="15" viewBox="0 0 12 15"><path d="M.5 .5h8l3 3v11H.5z" fill="#fff" stroke="#000" stroke-width="1"/><path d="M.5 14.5h11V4" fill="none" stroke="#000" stroke-width="1.6"/><path d="M1.5 1.5h6.5M1.5 1.5v12" stroke="#e6e600" stroke-width="1" stroke-dasharray="1 1" fill="none"/><path d="M3 4h5M3 6.5h6M3 9h6M3 11.5h6" stroke="#1414e6" stroke-width="1.2"/></svg>
<div class="t" style="left:82px;top:435px;font-size:12.400px;letter-spacing:.3px;word-spacing:-1px">Write custom macro</div>
<svg class="a" style="left:65px;top:451px" width="12" height="15" viewBox="0 0 12 15"><path d="M.5 .5h8l3 3v11H.5z" fill="#fff" stroke="#000" stroke-width="1"/><path d="M.5 14.5h11V4" fill="none" stroke="#000" stroke-width="1.6"/><path d="M1.5 1.5h6.5M1.5 1.5v12" stroke="#e6e600" stroke-width="1" stroke-dasharray="1 1" fill="none"/><path d="M3 4h5M3 6.5h6M3 9h6M3 11.5h6" stroke="#1414e6" stroke-width="1.2"/></svg>
<div class="t" style="left:82px;top:453px;font-size:12.400px;letter-spacing:.3px;word-spacing:-1px">Delete specified program</div>
<svg class="a" style="left:65px;top:469px" width="12" height="15" viewBox="0 0 12 15"><path d="M.5 .5h8l3 3v11H.5z" fill="#fff" stroke="#000" stroke-width="1"/><path d="M.5 14.5h11V4" fill="none" stroke="#000" stroke-width="1.6"/><path d="M1.5 1.5h6.5M1.5 1.5v12" stroke="#e6e600" stroke-width="1" stroke-dasharray="1 1" fill="none"/><path d="M3 4h5M3 6.5h6M3 9h6M3 11.5h6" stroke="#1414e6" stroke-width="1.2"/></svg>
<div class="t" style="left:82px;top:471px;font-size:12.400px;letter-spacing:.3px;word-spacing:-1px">Search specified program</div>
<svg class="a" style="left:65px;top:487px" width="12" height="15" viewBox="0 0 12 15"><path d="M.5 .5h8l3 3v11H.5z" fill="#fff" stroke="#000" stroke-width="1"/><path d="M.5 14.5h11V4" fill="none" stroke="#000" stroke-width="1.6"/><path d="M1.5 1.5h6.5M1.5 1.5v12" stroke="#e6e600" stroke-width="1" stroke-dasharray="1 1" fill="none"/><path d="M3 4h5M3 6.5h6M3 9h6M3 11.5h6" stroke="#1414e6" stroke-width="1.2"/></svg>
<div class="t" style="left:82px;top:489px;font-size:12.400px;letter-spacing:.3px;word-spacing:-1px">Read setting parameter</div>
<svg class="a" style="left:65px;top:505px" width="12" height="15" viewBox="0 0 12 15"><path d="M.5 .5h8l3 3v11H.5z" fill="#fff" stroke="#000" stroke-width="1"/><path d="M.5 14.5h11V4" fill="none" stroke="#000" stroke-width="1.6"/><path d="M1.5 1.5h6.5M1.5 1.5v12" stroke="#e6e600" stroke-width="1" stroke-dasharray="1 1" fill="none"/><path d="M3 4h5M3 6.5h6M3 9h6M3 11.5h6" stroke="#1414e6" stroke-width="1.2"/></svg>
<div class="t" style="left:82px;top:507px;font-size:12.400px;letter-spacing:.3px;word-spacing:-1px">Write setting parameter</div>
<svg class="a" style="left:65px;top:523px" width="12" height="15" viewBox="0 0 12 15"><path d="M.5 .5h8l3 3v11H.5z" fill="#fff" stroke="#000" stroke-width="1"/><path d="M.5 14.5h11V4" fill="none" stroke="#000" stroke-width="1.6"/><path d="M1.5 1.5h6.5M1.5 1.5v12" stroke="#e6e600" stroke-width="1" stroke-dasharray="1 1" fill="none"/><path d="M3 4h5M3 6.5h6M3 9h6M3 11.5h6" stroke="#1414e6" stroke-width="1.2"/></svg>
<div class="t" style="left:82px;top:525px;font-size:12.400px;letter-spacing:.3px;word-spacing:-1px">Read a P code variable</div>
<svg class="a" style="left:65px;top:541px" width="12" height="15" viewBox="0 0 12 15"><path d="M.5 .5h8l3 3v11H.5z" fill="#fff" stroke="#000" stroke-width="1"/><path d="M.5 14.5h11V4" fill="none" stroke="#000" stroke-width="1.6"/><path d="M1.5 1.5h6.5M1.5 1.5v12" stroke="#e6e600" stroke-width="1" stroke-dasharray="1 1" fill="none"/><path d="M3 4h5M3 6.5h6M3 9h6M3 11.5h6" stroke="#1414e6" stroke-width="1.2"/></svg>
<div class="t" style="left:82px;top:543px;font-size:12.400px;letter-spacing:.3px;word-spacing:-1px">Write a P code variable</div>
<svg class="a" style="left:65px;top:559px" width="12" height="15" viewBox="0 0 12 15"><path d="M.5 .5h8l3 3v11H.5z" fill="#fff" stroke="#000" stroke-width="1"/><path d="M.5 14.5h11V4" fill="none" stroke="#000" stroke-width="1.6"/><path d="M1.5 1.5h6.5M1.5 1.5v12" stroke="#e6e600" stroke-width="1" stroke-dasharray="1 1" fill="none"/><path d="M3 4h5M3 6.5h6M3 9h6M3 11.5h6" stroke="#1414e6" stroke-width="1.2"/></svg>
<div class="t" style="left:82px;top:561px;font-size:12.400px;letter-spacing:.3px;word-spacing:-1px">Preset of calendar</div>
<svg class="a" style="left:65px;top:577px" width="12" height="15" viewBox="0 0 12 15"><path d="M.5 .5h8l3 3v11H.5z" fill="#fff" stroke="#000" stroke-width="1"/><path d="M.5 14.5h11V4" fill="none" stroke="#000" stroke-width="1.6"/><path d="M1.5 1.5h6.5M1.5 1.5v12" stroke="#e6e600" stroke-width="1" stroke-dasharray="1 1" fill="none"/><path d="M3 4h5M3 6.5h6M3 9h6M3 11.5h6" stroke="#1414e6" stroke-width="1.2"/></svg>
<div class="t" style="left:82px;top:579px;font-size:12.400px;letter-spacing:.3px;word-spacing:-1px">Obtain CNC alarm</div>
<svg class="a" style="left:65px;top:595px" width="12" height="15" viewBox="0 0 12 15"><path d="M.5 .5h8l3 3v11H.5z" fill="#fff" stroke="#000" stroke-width="1"/><path d="M.5 14.5h11V4" fill="none" stroke="#000" stroke-width="1.6"/><path d="M1.5 1.5h6.5M1.5 1.5v12" stroke="#e6e600" stroke-width="1" stroke-dasharray="1 1" fill="none"/><path d="M3 4h5M3 6.5h6M3 9h6M3 11.5h6" stroke="#1414e6" stroke-width="1.2"/></svg>
<div class="t" style="left:82px;top:597px;font-size:12.400px;letter-spacing:.3px;word-spacing:-1px">Obtain history record</div>
<svg class="a" style="left:65px;top:613px" width="12" height="15" viewBox="0 0 12 15"><path d="M.5 .5h8l3 3v11H.5z" fill="#fff" stroke="#000" stroke-width="1"/><path d="M.5 14.5h11V4" fill="none" stroke="#000" stroke-width="1.6"/><path d="M1.5 1.5h6.5M1.5 1.5v12" stroke="#e6e600" stroke-width="1" stroke-dasharray="1 1" fill="none"/><path d="M3 4h5M3 6.5h6M3 9h6M3 11.5h6" stroke="#1414e6" stroke-width="1.2"/></svg>
<div class="t" style="left:82px;top:615px;font-size:12.400px;letter-spacing:.3px;word-spacing:-1px">Copy of variable</div>
<svg class="a" style="left:65px;top:631px" width="12" height="15" viewBox="0 0 12 15"><path d="M.5 .5h8l3 3v11H.5z" fill="#fff" stroke="#000" stroke-width="1"/><path d="M.5 14.5h11V4" fill="none" stroke="#000" stroke-width="1.6"/><path d="M1.5 1.5h6.5M1.5 1.5v12" stroke="#e6e600" stroke-width="1" stroke-dasharray="1 1" fill="none"/><path d="M3 4h5M3 6.5h6M3 9h6M3 11.5h6" stroke="#1414e6" stroke-width="1.2"/></svg>
<div class="t" style="left:82px;top:633px;font-size:12.400px;letter-spacing:.3px;word-spacing:-1px">Get/set property</div>
<svg class="a" style="left:65px;top:649px" width="12" height="15" viewBox="0 0 12 15"><path d="M.5 .5h8l3 3v11H.5z" fill="#fff" stroke="#000" stroke-width="1"/><path d="M.5 14.5h11V4" fill="none" stroke="#000" stroke-width="1.6"/><path d="M1.5 1.5h6.5M1.5 1.5v12" stroke="#e6e600" stroke-width="1" stroke-dasharray="1 1" fill="none"/><path d="M3 4h5M3 6.5h6M3 9h6M3 11.5h6" stroke="#1414e6" stroke-width="1.2"/></svg>
<div class="t" style="left:82px;top:651px;font-size:12.400px;letter-spacing:.3px;word-spacing:-1px">Read FANUC PICTURE</div>
<svg class="a" style="left:65px;top:667px" width="12" height="15" viewBox="0 0 12 15"><path d="M.5 .5h8l3 3v11H.5z" fill="#fff" stroke="#000" stroke-width="1"/><path d="M.5 14.5h11V4" fill="none" stroke="#000" stroke-width="1.6"/><path d="M1.5 1.5h6.5M1.5 1.5v12" stroke="#e6e600" stroke-width="1" stroke-dasharray="1 1" fill="none"/><path d="M3 4h5M3 6.5h6M3 9h6M3 11.5h6" stroke="#1414e6" stroke-width="1.2"/></svg>
<div class="t" style="left:82px;top:669px;font-size:12.400px;letter-spacing:.3px;word-spacing:-1px">Switch a screen</div>
<svg class="a" style="left:65px;top:685px" width="12" height="15" viewBox="0 0 12 15"><path d="M.5 .5h8l3 3v11H.5z" fill="#fff" stroke="#000" stroke-width="1"/><path d="M.5 14.5h11V4" fill="none" stroke="#000" stroke-width="1.6"/><path d="M1.5 1.5h6.5M1.5 1.5v12" stroke="#e6e600" stroke-width="1" stroke-dasharray="1 1" fill="none"/><path d="M3 4h5M3 6.5h6M3 9h6M3 11.5h6" stroke="#1414e6" stroke-width="1.2"/></svg>
<div class="t" style="left:82px;top:687px;font-size:12.400px;letter-spacing:.3px;word-spacing:-1px">Read a cursor number</div>
<svg class="a" style="left:65px;top:703px" width="12" height="15" viewBox="0 0 12 15"><path d="M.5 .5h8l3 3v11H.5z" fill="#fff" stroke="#000" stroke-width="1"/><path d="M.5 14.5h11V4" fill="none" stroke="#000" stroke-width="1.6"/><path d="M1.5 1.5h6.5M1.5 1.5v12" stroke="#e6e600" stroke-width="1" stroke-dasharray="1 1" fill="none"/><path d="M3 4h5M3 6.5h6M3 9h6M3 11.5h6" stroke="#1414e6" stroke-width="1.2"/></svg>
<div class="t" style="left:82px;top:705px;font-size:12.400px;letter-spacing:.3px;word-spacing:-1px">Write a cursor number</div>
<svg class="a" style="left:65px;top:721px" width="12" height="15" viewBox="0 0 12 15"><path d="M.5 .5h8l3 3v11H.5z" fill="#fff" stroke="#000" stroke-width="1"/><path d="M.5 14.5h11V4" fill="none" stroke="#000" stroke-width="1.6"/><path d="M1.5 1.5h6.5M1.5 1.5v12" stroke="#e6e600" stroke-width="1" stroke-dasharray="1 1" fill="none"/><path d="M3 4h5M3 6.5h6M3 9h6M3 11.5h6" stroke="#1414e6" stroke-width="1.2"/></svg>
<div class="t" style="left:82px;top:723px;font-size:12.400px;letter-spacing:.3px;word-spacing:-1px">Switch the CNC, screen</div>
<svg class="a" style="left:65px;top:739px" width="12" height="15" viewBox="0 0 12 15"><path d="M.5 .5h8l3 3v11H.5z" fill="#fff" stroke="#000" stroke-width="1"/><path d="M.5 14.5h11V4" fill="none" stroke="#000" stroke-width="1.6"/><path d="M1.5 1.5h6.5M1.5 1.5v12" stroke="#e6e600" stroke-width="1" stroke-dasharray="1 1" fill="none"/><path d="M3 4h5M3 6.5h6M3 9h6M3 11.5h6" stroke="#1414e6" stroke-width="1.2"/></svg>
<div class="t" style="left:82px;top:741px;font-size:12.400px;letter-spacing:.3px;word-spacing:-1px">FP script function</div>
<svg class="a" style="left:65px;top:757px" width="12" height="15" viewBox="0 0 12 15"><path d="M.5 .5h8l3 3v11H.5z" fill="#fff" stroke="#000" stroke-width="1"/><path d="M.5 14.5h11V4" fill="none" stroke="#000" stroke-width="1.6"/><path d="M1.5 1.5h6.5M1.5 1.5v12" stroke="#e6e600" stroke-width="1" stroke-dasharray="1 1" fill="none"/><path d="M3 4h5M3 6.5h6M3 9h6M3 11.5h6" stroke="#1414e6" stroke-width="1.2"/></svg>
<div class="t" style="left:82px;top:759px;font-size:12.400px;letter-spacing:.3px;word-spacing:-1px">Reading the spindle</div>
<svg class="a" style="left:65px;top:775px" width="12" height="15" viewBox="0 0 12 15"><path d="M.5 .5h8l3 3v11H.5z" fill="#fff" stroke="#000" stroke-width="1"/><path d="M.5 14.5h11V4" fill="none" stroke="#000" stroke-width="1.6"/><path d="M1.5 1.5h6.5M1.5 1.5v12" stroke="#e6e600" stroke-width="1" stroke-dasharray="1 1" fill="none"/><path d="M3 4h5M3 6.5h6M3 9h6M3 11.5h6" stroke="#1414e6" stroke-width="1.2"/></svg>
<div class="t" style="left:82px;top:777px;font-size:12.400px;letter-spacing:.3px;word-spacing:-1px">Scroll a message</div>
<svg class="a" style="left:65px;top:793px" width="12" height="15" viewBox="0 0 12 15"><path d="M.5 .5h8l3 3v11H.5z" fill="#fff" stroke="#000" stroke-width="1"/><path d="M.5 14.5h11V4" fill="none" stroke="#000" stroke-width="1.6"/><path d="M1.5 1.5h6.5M1.5 1.5v12" stroke="#e6e600" stroke-width="1" stroke-dasharray="1 1" fill="none"/><path d="M3 4h5M3 6.5h6M3 9h6M3 11.5h6" stroke="#1414e6" stroke-width="1.2"/></svg>
<div class="t" style="left:82px;top:795px;font-size:12.400px;letter-spacing:.3px;word-spacing:-1px">Input/Output a file</div>
<svg class="a" style="left:65px;top:811px" width="12" height="15" viewBox="0 0 12 15"><path d="M.5 .5h8l3 3v11H.5z" fill="#fff" stroke="#000" stroke-width="1"/><path d="M.5 14.5h11V4" fill="none" stroke="#000" stroke-width="1.6"/><path d="M1.5 1.5h6.5M1.5 1.5v12" stroke="#e6e600" stroke-width="1" stroke-dasharray="1 1" fill="none"/><path d="M3 4h5M3 6.5h6M3 9h6M3 11.5h6" stroke="#1414e6" stroke-width="1.2"/></svg>
<div class="t" style="left:82px;top:813px;font-size:12.400px;letter-spacing:.3px;word-spacing:-1px">Display and Operation</div>
<svg class="a" style="left:65px;top:829px" width="12" height="15" viewBox="0 0 12 15"><path d="M.5 .5h8l3 3v11H.5z" fill="#fff" stroke="#000" stroke-width="1"/><path d="M.5 14.5h11V4" fill="none" stroke="#000" stroke-width="1.6"/><path d="M1.5 1.5h6.5M1.5 1.5v12" stroke="#e6e600" stroke-width="1" stroke-dasharray="1 1" fill="none"/><path d="M3 4h5M3 6.5h6M3 9h6M3 11.5h6" stroke="#1414e6" stroke-width="1.2"/></svg>
<div class="t" style="left:82px;top:831px;font-size:12.400px;letter-spacing:.3px;word-spacing:-1px">Read the current</div>
<svg class="a" style="left:65px;top:847px" width="12" height="15" viewBox="0 0 12 15"><path d="M.5 .5h8l3 3v11H.5z" fill="#fff" stroke="#000" stroke-width="1"/><path d="M.5 14.5h11V4" fill="none" stroke="#000" stroke-width="1.6"/><path d="M1.5 1.5h6.5M1.5 1.5v12" stroke="#e6e600" stroke-width="1" stroke-dasharray="1 1" fill="none"/><path d="M3 4h5M3 6.5h6M3 9h6M3 11.5h6" stroke="#1414e6" stroke-width="1.2"/></svg>
<div class="t" style="left:82px;top:849px;font-size:12.400px;letter-spacing:.3px;word-spacing:-1px">Reading of project</div>
<div class="a" style="left:80px;top:864px;width:90px;height:18px;background:#ededed"></div>
<svg class="a" style="left:65px;top:865px" width="12" height="15" viewBox="0 0 12 15"><path d="M.5 .5h8l3 3v11H.5z" fill="#fff" stroke="#000" stroke-width="1"/><path d="M.5 14.5h11V4" fill="none" stroke="#000" stroke-width="1.6"/><path d="M1.5 1.5h6.5M1.5 1.5v12" stroke="#e6e600" stroke-width="1" stroke-dasharray="1 1" fill="none"/><path d="M3 4h5M3 6.5h6M3 9h6M3 11.5h6" stroke="#1414e6" stroke-width="1.2"/></svg>
<div class="t" style="left:82px;top:867px;font-size:12.400px;letter-spacing:.3px;word-spacing:-1px">String reading function</div>
<svg class="a" style="left:65px;top:883px" width="12" height="15" viewBox="0 0 12 15"><path d="M.5 .5h8l3 3v11H.5z" fill="#fff" stroke="#000" stroke-width="1"/><path d="M.5 14.5h11V4" fill="none" stroke="#000" stroke-width="1.6"/><path d="M1.5 1.5h6.5M1.5 1.5v12" stroke="#e6e600" stroke-width="1" stroke-dasharray="1 1" fill="none"/><path d="M3 4h5M3 6.5h6M3 9h6M3 11.5h6" stroke="#1414e6" stroke-width="1.2"/></svg>
</div>
<div class="a" style="left:1329px;top:125px;width:18px;height:886px;background:#f0f0f0"></div>
<div class="a" style="left:1330px;top:556px;width:16px;height:319px;background:#cdcdcd"></div>
<svg class="a" style="left:1333px;top:130px" width="10" height="7" viewBox="0 0 10 7"><path d="M1 5.5l4-4 4 4" fill="none" stroke="#5a5a5a" stroke-width="2"/></svg>
<svg class="a" style="left:1333px;top:998px" width="10" height="7" viewBox="0 0 10 7"><path d="M1 1.5l4 4 4-4" fill="none" stroke="#5a5a5a" stroke-width="2"/></svg>
<div class="a" style="left:1161px;top:1011px;width:186px;height:18px;background:#f0f0f0"></div>
<div class="a" style="left:1178px;top:1012px;width:47px;height:15px;background:#cdcdcd"></div>
<svg class="a" style="left:1166px;top:1015px" width="7" height="10" viewBox="0 0 7 10"><path d="M5.5 1l-4 4 4 4" fill="none" stroke="#5a5a5a" stroke-width="2"/></svg>
<svg class="a" style="left:1318px;top:1015px" width="7" height="10" viewBox="0 0 7 10"><path d="M1.5 1l4 4-4 4" fill="none" stroke="#5a5a5a" stroke-width="2"/></svg>
<!-- content.html -->
<!-- content pane -->
<div class="a" style="left:1373px;top:73px;width:538px;height:963px;background:#fff"></div>
<div class="a" style="left:1373px;top:73px;width:2px;height:963px;background:#6d6d6d"></div>
<div class="a" style="left:1373px;top:73px;width:538px;height:2px;background:#6d6d6d"></div>
<div class="a" style="left:1367px;top:74px;width:6px;height:962px;background:#f0f0f0"></div>
<div class="a" style="left:1385px;top:409px;width:498px;height:598px;border:1px solid #808080;border-left-color:#e6e6e6;border-top-color:#e6e6e6"></div>
<div class="a" style="left:1388px;top:412px;width:52px;height:18px;border:1px solid #e6e6e6;border-left-color:#808080;border-top-color:#808080"></div>
<div class="a" style="left:1442px;top:412px;width:439px;height:18px;border:1px solid #e6e6e6;border-left-color:#808080;border-top-color:#808080"></div>
<div class="a" style="left:1388px;top:432px;width:52px;height:270px;border:1px solid #e6e6e6;border-left-color:#808080;border-top-color:#808080"></div>
<div class="a" style="left:1442px;top:432px;width:439px;height:270px;border:1px solid #e6e6e6;border-left-color:#808080;border-top-color:#808080"></div>
<div class="a" style="left:1388px;top:704px;width:52px;height:60px;border:1px solid #e6e6e6;border-left-color:#808080;border-top-color:#808080"></div>
<div class="a" style="left:1442px;top:704px;width:439px;height:60px;border:1px solid #e6e6e6;border-left-color:#808080;border-top-color:#808080"></div>
<div class="a" style="left:1388px;top:766px;width:52px;height:18px;border:1px solid #e6e6e6;border-left-color:#808080;border-top-color:#808080"></div>
<div class="a" style="left:1442px;top:766px;width:439px;height:18px;border:1px solid #e6e6e6;border-left-color:#808080;border-top-color:#808080"></div>
<div class="a" style="left:1388px;top:786px;width:52px;height:46px;border:1px solid #e6e6e6;border-left-color:#808080;border-top-color:#808080"></div>
<div class="a" style="left:1442px;top:786px;width:439px;height:46px;border:1px solid #e6e6e6;border-left-color:#808080;border-top-color:#808080"></div>
<div class="a" style="left:1388px;top:834px;width:52px;height:74px;border:1px solid #e6e6e6;border-left-color:#808080;border-top-color:#808080"></div>
<div class="a" style="left:1442px;top:834px;width:439px;height:74px;border:1px solid #e6e6e6;border-left-color:#808080;border-top-color:#808080"></div>
<div class="a" style="left:1388px;top:910px;width:52px;height:46px;border:1px solid #e6e6e6;border-left-color:#808080;border-top-color:#808080"></div>
<div class="a" style="left:1442px;top:910px;width:439px;height:46px;border:1px solid #e6e6e6;border-left-color:#808080;border-top-color:#808080"></div>
<div class="a" style="left:1388px;top:958px;width:52px;height:46px;border:1px solid #e6e6e6;border-left-color:#808080;border-top-color:#808080"></div>
<div class="a" style="left:1442px;top:958px;width:439px;height:46px;border:1px solid #e6e6e6;border-left-color:#808080;border-top-color:#808080"></div>
<div class="t" style="left:1384.3px;top:89.9px;font-size:18px;letter-spacing:0.507px">String reading function</div>
<div class="t" style="left:1384.3px;top:129.1px;font-size:13.5px;font-weight:700;letter-spacing:0.155px">[Function name]</div>
<div class="t" style="left:1384.3px;top:162.9px;font-size:12.5px;letter-spacing:0.383px">rdstr</div>
<div class="t" style="left:1384.3px;top:195.1px;font-size:13.5px;font-weight:700;letter-spacing:0.282px">[Data type]</div>
<div class="t" style="left:1384.3px;top:228.9px;font-size:12.5px;letter-spacing:0.219px">6: String</div>
<div class="t" style="left:1384.3px;top:261.1px;font-size:13.5px;font-weight:700;letter-spacing:0.282px">[Format/with arguments]</div>
<div class="t" style="left:1384.3px;top:295.3px;font-size:12px;letter-spacing:-0.035px">rdstr[kind_snumber_first_count_pmc_address(_path) ]</div>
<div class="t" style="left:1384.3px;top:327.1px;font-size:13.5px;font-weight:700;letter-spacing:0.065px">[Arguments]</div>
<div class="t" style="left:1384.3px;top:360.9px;font-size:12.5px;letter-spacing:0.138px">The arguments of this function are as shown below.</div>
<div class="t" style="left:1544.0px;top:389.7px;font-size:12.5px;letter-spacing:0.306px">Arguments of the rdstr function</div>
<div class="t" style="left:1399.3px;top:414.0px;font-size:12.5px;line-height:14px;letter-spacing:-0.700px">Name</div>
<div class="t" style="left:1628.2px;top:414.0px;font-size:12.5px;line-height:14px;letter-spacing:0.155px">Description</div>
<div class="t" style="left:1389.5px;top:560.0px;font-size:12.5px;line-height:14px;letter-spacing:-0.263px">kind</div>
<div class="t" style="left:1443.3px;top:434.0px;font-size:12.5px;line-height:14px;letter-spacing:0.141px">Character string reading destination</div>
<div class="t" style="left:1453.7px;top:448.0px;font-size:12.5px;line-height:14px;letter-spacing:-0.125px">1nn: PMC area</div>
<div class="t" style="left:1464.1px;top:462.0px;font-size:12.5px;line-height:14px;letter-spacing:-0.045px">In nn, specify a type of PMC address.</div>
<div class="t" style="left:1464.1px;top:476.0px;font-size:12.5px;line-height:14px;letter-spacing:-0.107px">100 : G (PMC<span style="font-family:'Noto Sans CJK JP',sans-serif;position:relative;top:1.5px;line-height:0">→</span>CNC)</div>
<div class="t" style="left:1464.1px;top:490.0px;font-size:12.5px;line-height:14px;letter-spacing:-0.111px">101 : F (CNC<span style="font-family:'Noto Sans CJK JP',sans-serif;position:relative;top:1.5px;line-height:0">→</span>PMC)</div>
<div class="t" style="left:1464.1px;top:504.0px;font-size:12.5px;line-height:14px;letter-spacing:-0.018px">102 : Y (PMC<span style="font-family:'Noto Sans CJK JP',sans-serif;position:relative;top:1.5px;line-height:0">→</span>machine)</div>
<div class="t" style="left:1464.1px;top:518.0px;font-size:12.5px;line-height:14px;letter-spacing:-0.039px">103 : X (machine<span style="font-family:'Noto Sans CJK JP',sans-serif;position:relative;top:1.5px;line-height:0">→</span>PMC)</div>
<div class="t" style="left:1464.1px;top:532.0px;font-size:12.5px;line-height:14px;letter-spacing:0.022px">104 : A (message request)</div>
<div class="t" style="left:1464.1px;top:546.0px;font-size:12.5px;line-height:14px;letter-spacing:0.075px">105 : R (internal relay)</div>
<div class="t" style="left:1464.1px;top:560.0px;font-size:12.5px;line-height:14px;letter-spacing:0.085px">106 : T (variable timer)</div>
<div class="t" style="left:1464.1px;top:574.0px;font-size:12.5px;line-height:14px;letter-spacing:-0.045px">107 : K (keep relay)</div>
<div class="t" style="left:1464.1px;top:588.0px;font-size:12.5px;line-height:14px;letter-spacing:0.211px">108 : C (counter)</div>
<div class="t" style="left:1464.1px;top:602.0px;font-size:12.5px;line-height:14px;letter-spacing:-0.080px">109 : D (data table)</div>
<div class="t" style="left:1464.1px;top:616.0px;font-size:12.5px;line-height:14px;letter-spacing:0.110px">110 : M (from PMC path to input signal)</div>
<div class="t" style="left:1464.1px;top:630.0px;font-size:12.5px;line-height:14px;letter-spacing:0.169px">111 : N (output signal to the PMC path)</div>
<div class="t" style="left:1464.1px;top:644.0px;font-size:12.5px;line-height:14px;letter-spacing:0.092px">112 : E (internal relay)／PMC−SB7, etc</div>
<div class="t" style="left:1464.1px;top:658.0px;font-size:12.5px;line-height:14px;letter-spacing:0.055px">113 : Z (system relay)</div>
<div class="t" style="left:1453.7px;top:672.0px;font-size:12.5px;line-height:14px;letter-spacing:-0.038px">300 : P code variable</div>
<div class="t" style="left:1453.7px;top:686.0px;font-size:12.5px;line-height:14px;letter-spacing:0.115px">400 : Key Input Buffer</div>
<div class="t" style="left:1389.5px;top:727.0px;font-size:12.5px;line-height:14px;letter-spacing:-0.192px">snumber</div>
<div class="t" style="left:1443.3px;top:706.0px;font-size:12.5px;line-height:14px;letter-spacing:0.264px">Start number of the character string to be read</div>
<div class="t" style="left:1453.7px;top:720.0px;font-size:12.5px;line-height:14px;letter-spacing:-0.013px">In the case of kind is PMC area, specify PMC address.</div>
<div class="t" style="left:1453.7px;top:734.0px;font-size:12.5px;line-height:14px;letter-spacing:0.023px">In the case of kind is P code variable, specify variable number.</div>
<div class="t" style="left:1453.7px;top:748.0px;font-size:12.5px;line-height:14px;letter-spacing:0.139px">In the case of kind is Key Input Buffer, specify 0.</div>
<div class="t" style="left:1389.5px;top:768.0px;font-size:12.5px;line-height:14px;letter-spacing:0.502px">first</div>
<div class="t" style="left:1443.3px;top:768.0px;font-size:12.5px;line-height:14px;letter-spacing:0.241px">Position of the character string to be read (Offset from top)(byte)</div>
<div class="t" style="left:1389.5px;top:802.0px;font-size:12.5px;line-height:14px;letter-spacing:0.357px">count</div>
<div class="t" style="left:1443.3px;top:788.0px;font-size:12.5px;line-height:14px;letter-spacing:0.161px">Maximum size of the character string to be read. 1 to 255 (byte) can be</div>
<div class="t" style="left:1443.3px;top:802.0px;font-size:12.5px;line-height:14px;letter-spacing:-0.127px">specified.</div>
<div class="t" style="left:1443.3px;top:816.0px;font-size:12.5px;line-height:14px;letter-spacing:0.147px">It is read until there is NULL(0).</div>
<div class="t" style="left:1389.5px;top:864.0px;font-size:12.5px;line-height:14px;letter-spacing:-0.324px">pmc</div>
<div class="t" style="left:1443.3px;top:836.0px;font-size:12.5px;line-height:14px;letter-spacing:0.137px">Kind of PMC address for processing result notification</div>
<div class="t" style="left:1453.7px;top:850.0px;font-size:12.5px;line-height:14px;letter-spacing:-0.102px">5 : R</div>
<div class="t" style="left:1453.7px;top:864.0px;font-size:12.5px;line-height:14px;letter-spacing:-0.102px">9 : D</div>
<div class="t" style="left:1453.7px;top:878.0px;font-size:12.5px;line-height:14px;letter-spacing:-0.018px">12 : E (PMC−SB7, etc)</div>
<div class="t" style="left:1453.7px;top:892.0px;font-size:12.5px;line-height:14px;letter-spacing:0.216px">99 : Processing result is not notified</div>
<div class="t" style="left:1389.5px;top:926.0px;font-size:12.5px;line-height:14px;letter-spacing:-0.432px">address</div>
<div class="t" style="left:1443.3px;top:912.0px;font-size:12.5px;line-height:14px;letter-spacing:0.104px">PMC address where processing result is written</div>
<div class="t" style="left:1453.7px;top:926.0px;font-size:12.5px;line-height:14px;letter-spacing:0.067px">(The area in two bytes is used from the specified address)</div>
<div class="t" style="left:1453.7px;top:940.0px;font-size:12.5px;line-height:14px;letter-spacing:0.038px">Please specify 0 when you specify 99 for a kind of the PMC address.</div>
<div class="t" style="left:1389.5px;top:974.0px;font-size:12.5px;line-height:14px;letter-spacing:-0.154px">(path)</div>
<div class="t" style="left:1443.3px;top:960.0px;font-size:12.5px;line-height:14px;letter-spacing:0.069px">In the case of kind is PMC area, PMC path number specification.</div>
<div class="t" style="left:1443.3px;top:974.0px;font-size:12.5px;line-height:14px;letter-spacing:0.061px">In the case of kind is P code variable, CNC path number specification.</div>
<div class="t" style="left:1443.3px;top:988.0px;font-size:12.5px;line-height:14px;letter-spacing:-0.067px">Optional</div>
<div class="a" style="left:1893px;top:75px;width:18px;height:945px;background:#f0f0f0"></div>
<div class="a" style="left:1894px;top:93px;width:15px;height:542px;background:#cdcdcd"></div>
<svg class="a" style="left:1896px;top:994px" width="12" height="8" viewBox="0 0 12 8"><path d="M1 1.500l5 5 5-5" fill="none" stroke="#505050" stroke-width="2.400"/></svg>
<div class="a" style="left:1375px;top:1020px;width:536px;height:16px;background:#f0f0f0"></div>
<div class="a" style="left:1409px;top:1021px;width:384px;height:15px;background:#cdcdcd"></div>
<svg class="a" style="left:1391px;top:1022px" width="8" height="12" viewBox="0 0 8 12"><path d="M6.500 1l-5 5 5 5" fill="none" stroke="#505050" stroke-width="2.400"/></svg>
<svg class="a" style="left:1867px;top:1022px" width="8" height="12" viewBox="0 0 8 12"><path d="M1.500 1l5 5-5 5" fill="none" stroke="#505050" stroke-width="2.400"/></svg>
<!-- overlay.html -->
<!-- touch keyboard overlay -->
<div class="a" style="left:1747px;top:81px;width:172px;height:60px;background:#000"></div>
<div class="a" style="left:1752px;top:86px;width:50px;height:50px;background:#5a5a5a;border-radius:4px"></div>
<div class="a" style="left:1808px;top:86px;width:50px;height:50px;background:#5a5a5a;border-radius:4px"></div>
<svg class="a" style="left:1752px;top:86px" width="50" height="50" viewBox="0 0 50 50"><rect x="6" y="17" width="37" height="21" fill="#fff"/><path d="M24 17c-6-5-3-13 4-12 5 1 8 2 11-1" fill="none" stroke="#fff" stroke-width="2"/><g fill="#5a5a5a"><rect x="9" y="21" width="2.4" height="2.6"/><rect x="13" y="21" width="2.4" height="2.6"/><rect x="17" y="21" width="2.4" height="2.6"/><rect x="21" y="21" width="2.4" height="2.6"/><rect x="25" y="21" width="2.4" height="2.6"/><rect x="29" y="21" width="2.4" height="2.6"/><rect x="33" y="21" width="2.4" height="2.6"/><rect x="13" y="25.3" width="2.4" height="2.6"/><rect x="17" y="25.3" width="2.4" height="2.6"/><rect x="21" y="25.3" width="2.4" height="2.6"/><rect x="25" y="25.3" width="2.4" height="2.6"/><rect x="29" y="25.3" width="2.4" height="2.6"/><rect x="33" y="25.3" width="2.4" height="2.6"/><rect x="37.5" y="25.3" width="2.4" height="2.6"/><rect x="9" y="29.6" width="5.5" height="2.6"/><rect x="17" y="29.6" width="10.5" height="2.6"/><rect x="29.5" y="29.6" width="5.5" height="2.6"/><rect x="37.5" y="29.6" width="2.4" height="2.6"/></g></svg>
<svg class="a" style="left:1808px;top:86px" width="50" height="50" viewBox="0 0 50 50"><g fill="#fff"><rect x="8" y="8.5" width="9.2" height="9"/><rect x="20" y="8.5" width="9.2" height="9"/><rect x="32" y="8.5" width="9.2" height="9"/><rect x="8" y="20" width="9.2" height="9"/><rect x="20" y="20" width="9.2" height="9"/><rect x="32" y="20" width="9.2" height="9"/><rect x="8" y="31.5" width="9.2" height="9"/><rect x="20" y="31.5" width="9.2" height="9"/><rect x="32" y="31.5" width="9.2" height="9"/></g></svg>
<svg class="a" style="left:1872px;top:86px" width="36" height="50" viewBox="0 0 36 50"><g fill="#fff"><path d="M16.400 2.300l4.400 5.400h-3.200v6.600h6.200v-3l5.400 4.200-5.400 4.200v-3h-14.800v3l-5.400-4.200 5.400-4.200v3h6.200V7.700h-3.200z"/><path d="M14.600 15.500a1.850 1.850 0 0 1 3.700 0v10.700c.9-1.900 3.900-1.600 4.200.3.900-1.500 3.700-1.200 4 .6 1.100-1.300 4.200-.7 4.200 1.300v9.600c0 4.800-3 8-7.800 8h-3.100c-3.700 0-5.900-2.300-7.500-5.400l-5.500-10.600c-1-2 1.900-3.500 3.300-1.800l4.500 5.600z"/></g></svg>

</body></html>
